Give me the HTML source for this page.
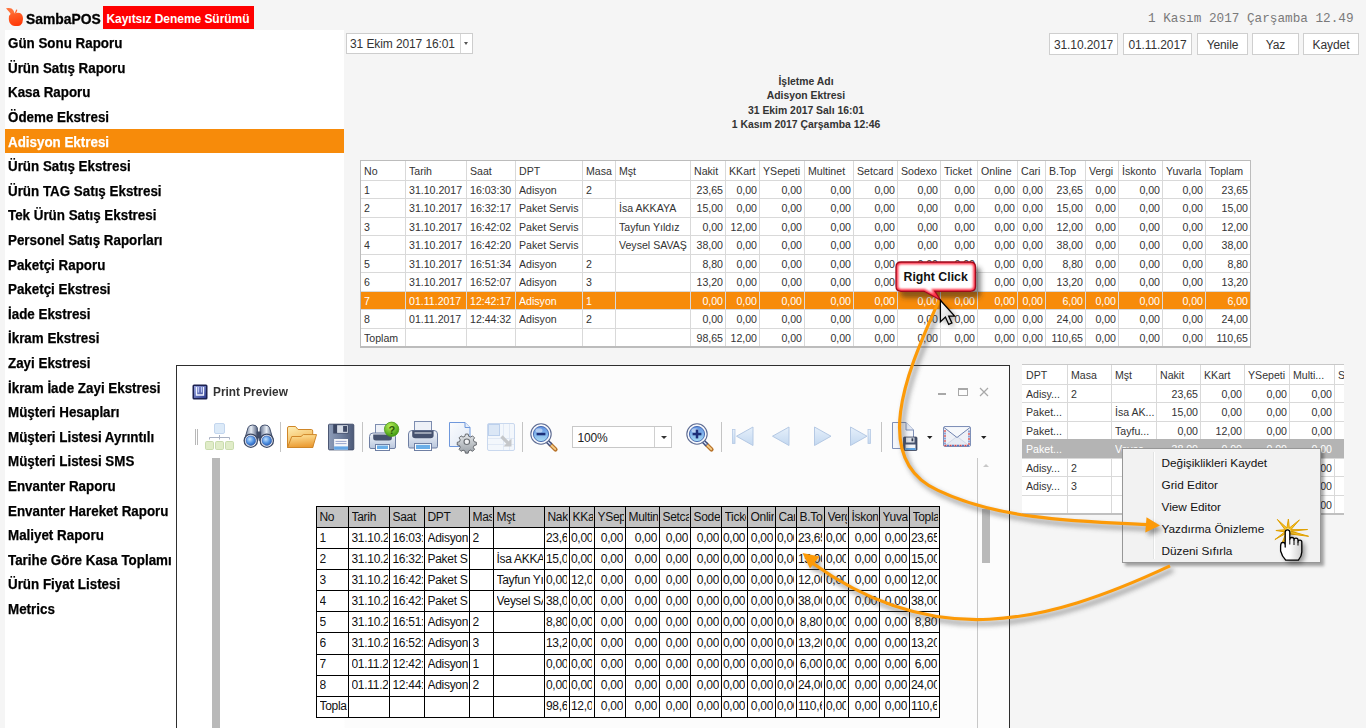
<!DOCTYPE html>
<html><head><meta charset="utf-8"><style>
*{box-sizing:border-box;margin:0;padding:0}
html,body{width:1366px;height:728px;overflow:hidden;background:#f5f5f5;font-family:"Liberation Sans",sans-serif;color:#222}
.a{position:absolute}
.mi{position:absolute;left:5px;width:339px;height:24px}
.mt{position:absolute;left:8.5px;font-weight:bold;color:#000;white-space:nowrap;-webkit-text-stroke:0.25px currentColor;transform:scaleX(0.955);transform-origin:0 0}
.btn{position:absolute;top:33px;height:22px;background:#fff;border:1px solid #cfcfcf;font-size:12px;color:#333;text-align:center;line-height:20px;padding-top:1px;white-space:nowrap}
.c{position:absolute;overflow:hidden;white-space:nowrap}
.hl{position:absolute;background:#d9d9d9}
.pl{position:absolute;background:#000}
.t{white-space:nowrap}
</style></head><body>
<div class="a" style="left:5px;top:30px;width:339px;height:698px;background:#fff"></div>
<svg class="a" style="left:0;top:0" width="30" height="30" viewBox="0 0 30 30">
<defs><linearGradient id="ap" x1="0" y1="0" x2="0.3" y2="1"><stop offset="0" stop-color="#ff6a30"/><stop offset="1" stop-color="#ff3a08"/></linearGradient></defs>
<path d="M6,8.2 Q9.5,7.6 11.5,8.4 Q13.5,9.6 14.6,13 L11.5,15 Q9.5,12 6,8.2Z" fill="#ff7038"/>
<path d="M15.6,12.8 L16.6,10.2" stroke="#ff6530" stroke-width="1.3" stroke-linecap="round"/>
<path d="M15.2,13.2 Q17.5,12.2 20,13 Q23,14.5 23,19 Q23,23 20.5,25.3 Q19.3,26.2 17.5,26 Q16.3,25.9 15.8,26 Q13.5,26.2 12,25.3 Q9,23.2 8.8,19 Q8.8,15 11,13.6 Q13,12.5 15.2,13.2Z" fill="url(#ap)"/>
</svg>
<div class="a t" style="left:26px;top:11.64px;font-size:14.6px;line-height:14.6px;font-weight:bold;color:#000;-webkit-text-stroke:0.3px #000;transform:scaleX(0.95);transform-origin:0 0">SambaPOS</div>
<div class="a" style="left:103px;top:6px;width:151px;height:23px;background:#ff0000"></div>
<div class="a t" style="left:106.5px;top:12.84px;font-size:12px;line-height:12px;font-weight:bold;color:#fff;letter-spacing:-0.05px">Kayıtsız Deneme Sürümü</div>
<div class="a t" style="left:1148px;top:13.25px;font-size:12.7px;line-height:12.7px;font-family:'Liberation Mono',monospace;color:#7a7a7a">1 Kasım 2017 Çarşamba 12.49</div>
<div class="mt" style="left:7.7px;top:36.15px;font-size:14px;line-height:14px;">Gün Sonu Raporu</div>
<div class="mt" style="left:7.7px;top:60.75px;font-size:14px;line-height:14px;">Ürün Satış Raporu</div>
<div class="mt" style="left:7.7px;top:85.35px;font-size:14px;line-height:14px;">Kasa Raporu</div>
<div class="mt" style="left:7.7px;top:109.95px;font-size:14px;line-height:14px;">Ödeme Ekstresi</div>
<div class="mi" style="top:129px;background:#f78b0a"></div>
<div class="mt" style="left:7.7px;top:134.55px;font-size:14px;line-height:14px;color:#fff">Adisyon Ektresi</div>
<div class="mt" style="left:7.7px;top:159.15px;font-size:14px;line-height:14px;">Ürün Satış Ekstresi</div>
<div class="mt" style="left:7.7px;top:183.75px;font-size:14px;line-height:14px;">Ürün TAG Satış Ekstresi</div>
<div class="mt" style="left:7.7px;top:208.35px;font-size:14px;line-height:14px;">Tek Ürün Satış Ekstresi</div>
<div class="mt" style="left:7.7px;top:232.95px;font-size:14px;line-height:14px;">Personel Satış Raporları</div>
<div class="mt" style="left:7.7px;top:257.55px;font-size:14px;line-height:14px;">Paketçi Raporu</div>
<div class="mt" style="left:7.7px;top:282.15px;font-size:14px;line-height:14px;">Paketçi Ekstresi</div>
<div class="mt" style="left:7.7px;top:306.75px;font-size:14px;line-height:14px;">İade Ekstresi</div>
<div class="mt" style="left:7.7px;top:331.35px;font-size:14px;line-height:14px;">İkram Ekstresi</div>
<div class="mt" style="left:7.7px;top:355.95px;font-size:14px;line-height:14px;">Zayi Ekstresi</div>
<div class="mt" style="left:7.7px;top:380.55px;font-size:14px;line-height:14px;">İkram İade Zayi Ekstresi</div>
<div class="mt" style="left:7.7px;top:405.15px;font-size:14px;line-height:14px;">Müşteri Hesapları</div>
<div class="mt" style="left:7.7px;top:429.75px;font-size:14px;line-height:14px;">Müşteri Listesi Ayrıntılı</div>
<div class="mt" style="left:7.7px;top:454.35px;font-size:14px;line-height:14px;">Müşteri Listesi SMS</div>
<div class="mt" style="left:7.7px;top:478.95px;font-size:14px;line-height:14px;">Envanter Raporu</div>
<div class="mt" style="left:7.7px;top:503.55px;font-size:14px;line-height:14px;">Envanter Hareket Raporu</div>
<div class="mt" style="left:7.7px;top:528.15px;font-size:14px;line-height:14px;">Maliyet Raporu</div>
<div class="mt" style="left:7.7px;top:552.75px;font-size:14px;line-height:14px;">Tarihe Göre Kasa Toplamı</div>
<div class="mt" style="left:7.7px;top:577.35px;font-size:14px;line-height:14px;">Ürün Fiyat Listesi</div>
<div class="mt" style="left:7.7px;top:601.95px;font-size:14px;line-height:14px;">Metrics</div>
<div class="a" style="left:346px;top:33px;width:127px;height:21px;background:#fff;border:1px solid #cdcdcd"></div>
<div class="a" style="left:460px;top:34px;width:1px;height:19px;background:#d6d6d6"></div>
<div class="a" style="left:464px;top:42px;width:0;height:0;border-left:2.5px solid transparent;border-right:2.5px solid transparent;border-top:3px solid #555"></div>
<div class="a t" style="left:350px;top:35px;font-size:12px;color:#333;line-height:18px;letter-spacing:-0.1px">31 Ekim 2017 16:01</div>
<div class="btn" style="left:1049px;width:69px;letter-spacing:-0.1px">31.10.2017</div>
<div class="btn" style="left:1123px;width:69px;letter-spacing:-0.1px">01.11.2017</div>
<div class="btn" style="left:1197px;width:51px;letter-spacing:-0.1px">Yenile</div>
<div class="btn" style="left:1252px;width:47px;letter-spacing:-0.1px">Yaz</div>
<div class="btn" style="left:1303px;width:56px;letter-spacing:-0.1px">Kaydet</div>
<div class="a t" style="left:606px;width:400px;text-align:center;top:77.30px;font-size:10.4px;font-weight:bold;color:#333;line-height:10.4px">İşletme Adı</div>
<div class="a t" style="left:606px;width:400px;text-align:center;top:91.40px;font-size:10.4px;font-weight:bold;color:#333;line-height:10.4px">Adisyon Ektresi</div>
<div class="a t" style="left:606px;width:400px;text-align:center;top:105.60px;font-size:10.4px;font-weight:bold;color:#333;line-height:10.4px">31 Ekim 2017 Salı 16:01</div>
<div class="a t" style="left:606px;width:400px;text-align:center;top:120.20px;font-size:10.4px;font-weight:bold;color:#333;line-height:10.4px">1 Kasım 2017 Çarşamba 12:46</div>
<div class="a" style="left:360px;top:160px;width:891px;height:188px;background:#fff;border:1px solid #bcbcbc;border-bottom:2px solid #bcbcbc"></div>
<div class="a" style="left:361px;top:291px;width:889px;height:18px;background:#f78b0a"></div>
<div class="hl" style="left:361px;top:180px;width:889px;height:1px"></div>
<div class="hl" style="left:361px;top:198px;width:889px;height:1px"></div>
<div class="hl" style="left:361px;top:217px;width:889px;height:1px"></div>
<div class="hl" style="left:361px;top:235px;width:889px;height:1px"></div>
<div class="hl" style="left:361px;top:254px;width:889px;height:1px"></div>
<div class="hl" style="left:361px;top:272px;width:889px;height:1px"></div>
<div class="hl" style="left:361px;top:291px;width:889px;height:1px"></div>
<div class="hl" style="left:361px;top:309px;width:889px;height:1px"></div>
<div class="hl" style="left:361px;top:328px;width:889px;height:1px"></div>
<div class="hl" style="left:405px;top:161px;width:1px;height:185px"></div>
<div class="hl" style="left:466px;top:161px;width:1px;height:185px"></div>
<div class="hl" style="left:515px;top:161px;width:1px;height:185px"></div>
<div class="hl" style="left:582px;top:161px;width:1px;height:185px"></div>
<div class="hl" style="left:615px;top:161px;width:1px;height:185px"></div>
<div class="hl" style="left:690px;top:161px;width:1px;height:185px"></div>
<div class="hl" style="left:725px;top:161px;width:1px;height:185px"></div>
<div class="hl" style="left:759px;top:161px;width:1px;height:185px"></div>
<div class="hl" style="left:804px;top:161px;width:1px;height:185px"></div>
<div class="hl" style="left:853px;top:161px;width:1px;height:185px"></div>
<div class="hl" style="left:897px;top:161px;width:1px;height:185px"></div>
<div class="hl" style="left:940px;top:161px;width:1px;height:185px"></div>
<div class="hl" style="left:977px;top:161px;width:1px;height:185px"></div>
<div class="hl" style="left:1017px;top:161px;width:1px;height:185px"></div>
<div class="hl" style="left:1045px;top:161px;width:1px;height:185px"></div>
<div class="hl" style="left:1085px;top:161px;width:1px;height:185px"></div>
<div class="hl" style="left:1118px;top:161px;width:1px;height:185px"></div>
<div class="hl" style="left:1162px;top:161px;width:1px;height:185px"></div>
<div class="hl" style="left:1205px;top:161px;width:1px;height:185px"></div>
<div class="c" style="left:364px;top:164.0px;width:41px;height:14px;font-size:10.6px;line-height:14px;color:#333">No</div>
<div class="c" style="left:409px;top:164.0px;width:57px;height:14px;font-size:10.6px;line-height:14px;color:#333">Tarih</div>
<div class="c" style="left:470px;top:164.0px;width:45px;height:14px;font-size:10.6px;line-height:14px;color:#333">Saat</div>
<div class="c" style="left:519px;top:164.0px;width:63px;height:14px;font-size:10.6px;line-height:14px;color:#333">DPT</div>
<div class="c" style="left:586px;top:164.0px;width:29px;height:14px;font-size:10.6px;line-height:14px;color:#333">Masa</div>
<div class="c" style="left:619px;top:164.0px;width:71px;height:14px;font-size:10.6px;line-height:14px;color:#333">Mşt</div>
<div class="c" style="left:694px;top:164.0px;width:31px;height:14px;font-size:10.6px;line-height:14px;color:#333">Nakit</div>
<div class="c" style="left:729px;top:164.0px;width:30px;height:14px;font-size:10.6px;line-height:14px;color:#333">KKart</div>
<div class="c" style="left:763px;top:164.0px;width:41px;height:14px;font-size:10.6px;line-height:14px;color:#333">YSepeti</div>
<div class="c" style="left:808px;top:164.0px;width:45px;height:14px;font-size:10.6px;line-height:14px;color:#333">Multinet</div>
<div class="c" style="left:857px;top:164.0px;width:40px;height:14px;font-size:10.6px;line-height:14px;color:#333">Setcard</div>
<div class="c" style="left:901px;top:164.0px;width:39px;height:14px;font-size:10.6px;line-height:14px;color:#333">Sodexo</div>
<div class="c" style="left:944px;top:164.0px;width:33px;height:14px;font-size:10.6px;line-height:14px;color:#333">Ticket</div>
<div class="c" style="left:981px;top:164.0px;width:36px;height:14px;font-size:10.6px;line-height:14px;color:#333">Online</div>
<div class="c" style="left:1021px;top:164.0px;width:24px;height:14px;font-size:10.6px;line-height:14px;color:#333">Cari</div>
<div class="c" style="left:1049px;top:164.0px;width:36px;height:14px;font-size:10.6px;line-height:14px;color:#333">B.Top</div>
<div class="c" style="left:1089px;top:164.0px;width:29px;height:14px;font-size:10.6px;line-height:14px;color:#333">Vergi</div>
<div class="c" style="left:1122px;top:164.0px;width:40px;height:14px;font-size:10.6px;line-height:14px;color:#333">İskonto</div>
<div class="c" style="left:1166px;top:164.0px;width:39px;height:14px;font-size:10.6px;line-height:14px;color:#333">Yuvarla</div>
<div class="c" style="left:1209px;top:164.0px;width:41px;height:14px;font-size:10.6px;line-height:14px;color:#333">Toplam</div>
<div class="c" style="left:364px;top:182.5px;width:41px;font-size:10.6px;line-height:14px;color:#333">1</div>
<div class="c" style="left:409px;top:182.5px;width:57px;font-size:10.6px;line-height:14px;color:#333">31.10.2017</div>
<div class="c" style="left:470px;top:182.5px;width:45px;font-size:10.6px;line-height:14px;color:#333">16:03:30</div>
<div class="c" style="left:519px;top:182.5px;width:63px;font-size:10.6px;line-height:14px;color:#333">Adisyon</div>
<div class="c" style="left:586px;top:182.5px;width:29px;font-size:10.6px;line-height:14px;color:#333">2</div>
<div class="c" style="left:691px;top:182.5px;width:32.0px;text-align:right;font-size:10.6px;line-height:14px;color:#333">23,65</div>
<div class="c" style="left:726px;top:182.5px;width:31.0px;text-align:right;font-size:10.6px;line-height:14px;color:#333">0,00</div>
<div class="c" style="left:760px;top:182.5px;width:42.0px;text-align:right;font-size:10.6px;line-height:14px;color:#333">0,00</div>
<div class="c" style="left:805px;top:182.5px;width:46.0px;text-align:right;font-size:10.6px;line-height:14px;color:#333">0,00</div>
<div class="c" style="left:854px;top:182.5px;width:41.0px;text-align:right;font-size:10.6px;line-height:14px;color:#333">0,00</div>
<div class="c" style="left:898px;top:182.5px;width:40.0px;text-align:right;font-size:10.6px;line-height:14px;color:#333">0,00</div>
<div class="c" style="left:941px;top:182.5px;width:34.0px;text-align:right;font-size:10.6px;line-height:14px;color:#333">0,00</div>
<div class="c" style="left:978px;top:182.5px;width:37.0px;text-align:right;font-size:10.6px;line-height:14px;color:#333">0,00</div>
<div class="c" style="left:1018px;top:182.5px;width:25.0px;text-align:right;font-size:10.6px;line-height:14px;color:#333">0,00</div>
<div class="c" style="left:1046px;top:182.5px;width:37.0px;text-align:right;font-size:10.6px;line-height:14px;color:#333">23,65</div>
<div class="c" style="left:1086px;top:182.5px;width:30.0px;text-align:right;font-size:10.6px;line-height:14px;color:#333">0,00</div>
<div class="c" style="left:1119px;top:182.5px;width:41.0px;text-align:right;font-size:10.6px;line-height:14px;color:#333">0,00</div>
<div class="c" style="left:1163px;top:182.5px;width:40.0px;text-align:right;font-size:10.6px;line-height:14px;color:#333">0,00</div>
<div class="c" style="left:1206px;top:182.5px;width:42.0px;text-align:right;font-size:10.6px;line-height:14px;color:#333">23,65</div>
<div class="c" style="left:364px;top:201.0px;width:41px;font-size:10.6px;line-height:14px;color:#333">2</div>
<div class="c" style="left:409px;top:201.0px;width:57px;font-size:10.6px;line-height:14px;color:#333">31.10.2017</div>
<div class="c" style="left:470px;top:201.0px;width:45px;font-size:10.6px;line-height:14px;color:#333">16:32:17</div>
<div class="c" style="left:519px;top:201.0px;width:63px;font-size:10.6px;line-height:14px;color:#333">Paket Servis</div>
<div class="c" style="left:619px;top:201.0px;width:71px;font-size:10.6px;line-height:14px;color:#333">İsa AKKAYA</div>
<div class="c" style="left:691px;top:201.0px;width:32.0px;text-align:right;font-size:10.6px;line-height:14px;color:#333">15,00</div>
<div class="c" style="left:726px;top:201.0px;width:31.0px;text-align:right;font-size:10.6px;line-height:14px;color:#333">0,00</div>
<div class="c" style="left:760px;top:201.0px;width:42.0px;text-align:right;font-size:10.6px;line-height:14px;color:#333">0,00</div>
<div class="c" style="left:805px;top:201.0px;width:46.0px;text-align:right;font-size:10.6px;line-height:14px;color:#333">0,00</div>
<div class="c" style="left:854px;top:201.0px;width:41.0px;text-align:right;font-size:10.6px;line-height:14px;color:#333">0,00</div>
<div class="c" style="left:898px;top:201.0px;width:40.0px;text-align:right;font-size:10.6px;line-height:14px;color:#333">0,00</div>
<div class="c" style="left:941px;top:201.0px;width:34.0px;text-align:right;font-size:10.6px;line-height:14px;color:#333">0,00</div>
<div class="c" style="left:978px;top:201.0px;width:37.0px;text-align:right;font-size:10.6px;line-height:14px;color:#333">0,00</div>
<div class="c" style="left:1018px;top:201.0px;width:25.0px;text-align:right;font-size:10.6px;line-height:14px;color:#333">0,00</div>
<div class="c" style="left:1046px;top:201.0px;width:37.0px;text-align:right;font-size:10.6px;line-height:14px;color:#333">15,00</div>
<div class="c" style="left:1086px;top:201.0px;width:30.0px;text-align:right;font-size:10.6px;line-height:14px;color:#333">0,00</div>
<div class="c" style="left:1119px;top:201.0px;width:41.0px;text-align:right;font-size:10.6px;line-height:14px;color:#333">0,00</div>
<div class="c" style="left:1163px;top:201.0px;width:40.0px;text-align:right;font-size:10.6px;line-height:14px;color:#333">0,00</div>
<div class="c" style="left:1206px;top:201.0px;width:42.0px;text-align:right;font-size:10.6px;line-height:14px;color:#333">15,00</div>
<div class="c" style="left:364px;top:219.5px;width:41px;font-size:10.6px;line-height:14px;color:#333">3</div>
<div class="c" style="left:409px;top:219.5px;width:57px;font-size:10.6px;line-height:14px;color:#333">31.10.2017</div>
<div class="c" style="left:470px;top:219.5px;width:45px;font-size:10.6px;line-height:14px;color:#333">16:42:02</div>
<div class="c" style="left:519px;top:219.5px;width:63px;font-size:10.6px;line-height:14px;color:#333">Paket Servis</div>
<div class="c" style="left:619px;top:219.5px;width:71px;font-size:10.6px;line-height:14px;color:#333">Tayfun Yıldız</div>
<div class="c" style="left:691px;top:219.5px;width:32.0px;text-align:right;font-size:10.6px;line-height:14px;color:#333">0,00</div>
<div class="c" style="left:726px;top:219.5px;width:31.0px;text-align:right;font-size:10.6px;line-height:14px;color:#333">12,00</div>
<div class="c" style="left:760px;top:219.5px;width:42.0px;text-align:right;font-size:10.6px;line-height:14px;color:#333">0,00</div>
<div class="c" style="left:805px;top:219.5px;width:46.0px;text-align:right;font-size:10.6px;line-height:14px;color:#333">0,00</div>
<div class="c" style="left:854px;top:219.5px;width:41.0px;text-align:right;font-size:10.6px;line-height:14px;color:#333">0,00</div>
<div class="c" style="left:898px;top:219.5px;width:40.0px;text-align:right;font-size:10.6px;line-height:14px;color:#333">0,00</div>
<div class="c" style="left:941px;top:219.5px;width:34.0px;text-align:right;font-size:10.6px;line-height:14px;color:#333">0,00</div>
<div class="c" style="left:978px;top:219.5px;width:37.0px;text-align:right;font-size:10.6px;line-height:14px;color:#333">0,00</div>
<div class="c" style="left:1018px;top:219.5px;width:25.0px;text-align:right;font-size:10.6px;line-height:14px;color:#333">0,00</div>
<div class="c" style="left:1046px;top:219.5px;width:37.0px;text-align:right;font-size:10.6px;line-height:14px;color:#333">12,00</div>
<div class="c" style="left:1086px;top:219.5px;width:30.0px;text-align:right;font-size:10.6px;line-height:14px;color:#333">0,00</div>
<div class="c" style="left:1119px;top:219.5px;width:41.0px;text-align:right;font-size:10.6px;line-height:14px;color:#333">0,00</div>
<div class="c" style="left:1163px;top:219.5px;width:40.0px;text-align:right;font-size:10.6px;line-height:14px;color:#333">0,00</div>
<div class="c" style="left:1206px;top:219.5px;width:42.0px;text-align:right;font-size:10.6px;line-height:14px;color:#333">12,00</div>
<div class="c" style="left:364px;top:238.0px;width:41px;font-size:10.6px;line-height:14px;color:#333">4</div>
<div class="c" style="left:409px;top:238.0px;width:57px;font-size:10.6px;line-height:14px;color:#333">31.10.2017</div>
<div class="c" style="left:470px;top:238.0px;width:45px;font-size:10.6px;line-height:14px;color:#333">16:42:20</div>
<div class="c" style="left:519px;top:238.0px;width:63px;font-size:10.6px;line-height:14px;color:#333">Paket Servis</div>
<div class="c" style="left:619px;top:238.0px;width:71px;font-size:10.6px;line-height:14px;color:#333">Veysel SAVAŞ</div>
<div class="c" style="left:691px;top:238.0px;width:32.0px;text-align:right;font-size:10.6px;line-height:14px;color:#333">38,00</div>
<div class="c" style="left:726px;top:238.0px;width:31.0px;text-align:right;font-size:10.6px;line-height:14px;color:#333">0,00</div>
<div class="c" style="left:760px;top:238.0px;width:42.0px;text-align:right;font-size:10.6px;line-height:14px;color:#333">0,00</div>
<div class="c" style="left:805px;top:238.0px;width:46.0px;text-align:right;font-size:10.6px;line-height:14px;color:#333">0,00</div>
<div class="c" style="left:854px;top:238.0px;width:41.0px;text-align:right;font-size:10.6px;line-height:14px;color:#333">0,00</div>
<div class="c" style="left:898px;top:238.0px;width:40.0px;text-align:right;font-size:10.6px;line-height:14px;color:#333">0,00</div>
<div class="c" style="left:941px;top:238.0px;width:34.0px;text-align:right;font-size:10.6px;line-height:14px;color:#333">0,00</div>
<div class="c" style="left:978px;top:238.0px;width:37.0px;text-align:right;font-size:10.6px;line-height:14px;color:#333">0,00</div>
<div class="c" style="left:1018px;top:238.0px;width:25.0px;text-align:right;font-size:10.6px;line-height:14px;color:#333">0,00</div>
<div class="c" style="left:1046px;top:238.0px;width:37.0px;text-align:right;font-size:10.6px;line-height:14px;color:#333">38,00</div>
<div class="c" style="left:1086px;top:238.0px;width:30.0px;text-align:right;font-size:10.6px;line-height:14px;color:#333">0,00</div>
<div class="c" style="left:1119px;top:238.0px;width:41.0px;text-align:right;font-size:10.6px;line-height:14px;color:#333">0,00</div>
<div class="c" style="left:1163px;top:238.0px;width:40.0px;text-align:right;font-size:10.6px;line-height:14px;color:#333">0,00</div>
<div class="c" style="left:1206px;top:238.0px;width:42.0px;text-align:right;font-size:10.6px;line-height:14px;color:#333">38,00</div>
<div class="c" style="left:364px;top:256.5px;width:41px;font-size:10.6px;line-height:14px;color:#333">5</div>
<div class="c" style="left:409px;top:256.5px;width:57px;font-size:10.6px;line-height:14px;color:#333">31.10.2017</div>
<div class="c" style="left:470px;top:256.5px;width:45px;font-size:10.6px;line-height:14px;color:#333">16:51:34</div>
<div class="c" style="left:519px;top:256.5px;width:63px;font-size:10.6px;line-height:14px;color:#333">Adisyon</div>
<div class="c" style="left:586px;top:256.5px;width:29px;font-size:10.6px;line-height:14px;color:#333">2</div>
<div class="c" style="left:691px;top:256.5px;width:32.0px;text-align:right;font-size:10.6px;line-height:14px;color:#333">8,80</div>
<div class="c" style="left:726px;top:256.5px;width:31.0px;text-align:right;font-size:10.6px;line-height:14px;color:#333">0,00</div>
<div class="c" style="left:760px;top:256.5px;width:42.0px;text-align:right;font-size:10.6px;line-height:14px;color:#333">0,00</div>
<div class="c" style="left:805px;top:256.5px;width:46.0px;text-align:right;font-size:10.6px;line-height:14px;color:#333">0,00</div>
<div class="c" style="left:854px;top:256.5px;width:41.0px;text-align:right;font-size:10.6px;line-height:14px;color:#333">0,00</div>
<div class="c" style="left:898px;top:256.5px;width:40.0px;text-align:right;font-size:10.6px;line-height:14px;color:#333">0,00</div>
<div class="c" style="left:941px;top:256.5px;width:34.0px;text-align:right;font-size:10.6px;line-height:14px;color:#333">0,00</div>
<div class="c" style="left:978px;top:256.5px;width:37.0px;text-align:right;font-size:10.6px;line-height:14px;color:#333">0,00</div>
<div class="c" style="left:1018px;top:256.5px;width:25.0px;text-align:right;font-size:10.6px;line-height:14px;color:#333">0,00</div>
<div class="c" style="left:1046px;top:256.5px;width:37.0px;text-align:right;font-size:10.6px;line-height:14px;color:#333">8,80</div>
<div class="c" style="left:1086px;top:256.5px;width:30.0px;text-align:right;font-size:10.6px;line-height:14px;color:#333">0,00</div>
<div class="c" style="left:1119px;top:256.5px;width:41.0px;text-align:right;font-size:10.6px;line-height:14px;color:#333">0,00</div>
<div class="c" style="left:1163px;top:256.5px;width:40.0px;text-align:right;font-size:10.6px;line-height:14px;color:#333">0,00</div>
<div class="c" style="left:1206px;top:256.5px;width:42.0px;text-align:right;font-size:10.6px;line-height:14px;color:#333">8,80</div>
<div class="c" style="left:364px;top:275.0px;width:41px;font-size:10.6px;line-height:14px;color:#333">6</div>
<div class="c" style="left:409px;top:275.0px;width:57px;font-size:10.6px;line-height:14px;color:#333">31.10.2017</div>
<div class="c" style="left:470px;top:275.0px;width:45px;font-size:10.6px;line-height:14px;color:#333">16:52:07</div>
<div class="c" style="left:519px;top:275.0px;width:63px;font-size:10.6px;line-height:14px;color:#333">Adisyon</div>
<div class="c" style="left:586px;top:275.0px;width:29px;font-size:10.6px;line-height:14px;color:#333">3</div>
<div class="c" style="left:691px;top:275.0px;width:32.0px;text-align:right;font-size:10.6px;line-height:14px;color:#333">13,20</div>
<div class="c" style="left:726px;top:275.0px;width:31.0px;text-align:right;font-size:10.6px;line-height:14px;color:#333">0,00</div>
<div class="c" style="left:760px;top:275.0px;width:42.0px;text-align:right;font-size:10.6px;line-height:14px;color:#333">0,00</div>
<div class="c" style="left:805px;top:275.0px;width:46.0px;text-align:right;font-size:10.6px;line-height:14px;color:#333">0,00</div>
<div class="c" style="left:854px;top:275.0px;width:41.0px;text-align:right;font-size:10.6px;line-height:14px;color:#333">0,00</div>
<div class="c" style="left:898px;top:275.0px;width:40.0px;text-align:right;font-size:10.6px;line-height:14px;color:#333">0,00</div>
<div class="c" style="left:941px;top:275.0px;width:34.0px;text-align:right;font-size:10.6px;line-height:14px;color:#333">0,00</div>
<div class="c" style="left:978px;top:275.0px;width:37.0px;text-align:right;font-size:10.6px;line-height:14px;color:#333">0,00</div>
<div class="c" style="left:1018px;top:275.0px;width:25.0px;text-align:right;font-size:10.6px;line-height:14px;color:#333">0,00</div>
<div class="c" style="left:1046px;top:275.0px;width:37.0px;text-align:right;font-size:10.6px;line-height:14px;color:#333">13,20</div>
<div class="c" style="left:1086px;top:275.0px;width:30.0px;text-align:right;font-size:10.6px;line-height:14px;color:#333">0,00</div>
<div class="c" style="left:1119px;top:275.0px;width:41.0px;text-align:right;font-size:10.6px;line-height:14px;color:#333">0,00</div>
<div class="c" style="left:1163px;top:275.0px;width:40.0px;text-align:right;font-size:10.6px;line-height:14px;color:#333">0,00</div>
<div class="c" style="left:1206px;top:275.0px;width:42.0px;text-align:right;font-size:10.6px;line-height:14px;color:#333">13,20</div>
<div class="c" style="left:364px;top:293.5px;width:41px;font-size:10.6px;line-height:14px;color:#fff">7</div>
<div class="c" style="left:409px;top:293.5px;width:57px;font-size:10.6px;line-height:14px;color:#fff">01.11.2017</div>
<div class="c" style="left:470px;top:293.5px;width:45px;font-size:10.6px;line-height:14px;color:#fff">12:42:17</div>
<div class="c" style="left:519px;top:293.5px;width:63px;font-size:10.6px;line-height:14px;color:#fff">Adisyon</div>
<div class="c" style="left:586px;top:293.5px;width:29px;font-size:10.6px;line-height:14px;color:#fff">1</div>
<div class="c" style="left:691px;top:293.5px;width:32.0px;text-align:right;font-size:10.6px;line-height:14px;color:#fff">0,00</div>
<div class="c" style="left:726px;top:293.5px;width:31.0px;text-align:right;font-size:10.6px;line-height:14px;color:#fff">0,00</div>
<div class="c" style="left:760px;top:293.5px;width:42.0px;text-align:right;font-size:10.6px;line-height:14px;color:#fff">0,00</div>
<div class="c" style="left:805px;top:293.5px;width:46.0px;text-align:right;font-size:10.6px;line-height:14px;color:#fff">0,00</div>
<div class="c" style="left:854px;top:293.5px;width:41.0px;text-align:right;font-size:10.6px;line-height:14px;color:#fff">0,00</div>
<div class="c" style="left:898px;top:293.5px;width:40.0px;text-align:right;font-size:10.6px;line-height:14px;color:#fff">0,00</div>
<div class="c" style="left:941px;top:293.5px;width:34.0px;text-align:right;font-size:10.6px;line-height:14px;color:#fff">0,00</div>
<div class="c" style="left:978px;top:293.5px;width:37.0px;text-align:right;font-size:10.6px;line-height:14px;color:#fff">0,00</div>
<div class="c" style="left:1018px;top:293.5px;width:25.0px;text-align:right;font-size:10.6px;line-height:14px;color:#fff">0,00</div>
<div class="c" style="left:1046px;top:293.5px;width:37.0px;text-align:right;font-size:10.6px;line-height:14px;color:#fff">6,00</div>
<div class="c" style="left:1086px;top:293.5px;width:30.0px;text-align:right;font-size:10.6px;line-height:14px;color:#fff">0,00</div>
<div class="c" style="left:1119px;top:293.5px;width:41.0px;text-align:right;font-size:10.6px;line-height:14px;color:#fff">0,00</div>
<div class="c" style="left:1163px;top:293.5px;width:40.0px;text-align:right;font-size:10.6px;line-height:14px;color:#fff">0,00</div>
<div class="c" style="left:1206px;top:293.5px;width:42.0px;text-align:right;font-size:10.6px;line-height:14px;color:#fff">6,00</div>
<div class="c" style="left:364px;top:312.0px;width:41px;font-size:10.6px;line-height:14px;color:#333">8</div>
<div class="c" style="left:409px;top:312.0px;width:57px;font-size:10.6px;line-height:14px;color:#333">01.11.2017</div>
<div class="c" style="left:470px;top:312.0px;width:45px;font-size:10.6px;line-height:14px;color:#333">12:44:32</div>
<div class="c" style="left:519px;top:312.0px;width:63px;font-size:10.6px;line-height:14px;color:#333">Adisyon</div>
<div class="c" style="left:586px;top:312.0px;width:29px;font-size:10.6px;line-height:14px;color:#333">2</div>
<div class="c" style="left:691px;top:312.0px;width:32.0px;text-align:right;font-size:10.6px;line-height:14px;color:#333">0,00</div>
<div class="c" style="left:726px;top:312.0px;width:31.0px;text-align:right;font-size:10.6px;line-height:14px;color:#333">0,00</div>
<div class="c" style="left:760px;top:312.0px;width:42.0px;text-align:right;font-size:10.6px;line-height:14px;color:#333">0,00</div>
<div class="c" style="left:805px;top:312.0px;width:46.0px;text-align:right;font-size:10.6px;line-height:14px;color:#333">0,00</div>
<div class="c" style="left:854px;top:312.0px;width:41.0px;text-align:right;font-size:10.6px;line-height:14px;color:#333">0,00</div>
<div class="c" style="left:898px;top:312.0px;width:40.0px;text-align:right;font-size:10.6px;line-height:14px;color:#333">0,00</div>
<div class="c" style="left:941px;top:312.0px;width:34.0px;text-align:right;font-size:10.6px;line-height:14px;color:#333">0,00</div>
<div class="c" style="left:978px;top:312.0px;width:37.0px;text-align:right;font-size:10.6px;line-height:14px;color:#333">0,00</div>
<div class="c" style="left:1018px;top:312.0px;width:25.0px;text-align:right;font-size:10.6px;line-height:14px;color:#333">0,00</div>
<div class="c" style="left:1046px;top:312.0px;width:37.0px;text-align:right;font-size:10.6px;line-height:14px;color:#333">24,00</div>
<div class="c" style="left:1086px;top:312.0px;width:30.0px;text-align:right;font-size:10.6px;line-height:14px;color:#333">0,00</div>
<div class="c" style="left:1119px;top:312.0px;width:41.0px;text-align:right;font-size:10.6px;line-height:14px;color:#333">0,00</div>
<div class="c" style="left:1163px;top:312.0px;width:40.0px;text-align:right;font-size:10.6px;line-height:14px;color:#333">0,00</div>
<div class="c" style="left:1206px;top:312.0px;width:42.0px;text-align:right;font-size:10.6px;line-height:14px;color:#333">24,00</div>
<div class="c" style="left:364px;top:330.5px;width:41px;font-size:10.6px;line-height:14px;color:#333">Toplam</div>
<div class="c" style="left:691px;top:330.5px;width:32.0px;text-align:right;font-size:10.6px;line-height:14px;color:#333">98,65</div>
<div class="c" style="left:726px;top:330.5px;width:31.0px;text-align:right;font-size:10.6px;line-height:14px;color:#333">12,00</div>
<div class="c" style="left:760px;top:330.5px;width:42.0px;text-align:right;font-size:10.6px;line-height:14px;color:#333">0,00</div>
<div class="c" style="left:805px;top:330.5px;width:46.0px;text-align:right;font-size:10.6px;line-height:14px;color:#333">0,00</div>
<div class="c" style="left:854px;top:330.5px;width:41.0px;text-align:right;font-size:10.6px;line-height:14px;color:#333">0,00</div>
<div class="c" style="left:898px;top:330.5px;width:40.0px;text-align:right;font-size:10.6px;line-height:14px;color:#333">0,00</div>
<div class="c" style="left:941px;top:330.5px;width:34.0px;text-align:right;font-size:10.6px;line-height:14px;color:#333">0,00</div>
<div class="c" style="left:978px;top:330.5px;width:37.0px;text-align:right;font-size:10.6px;line-height:14px;color:#333">0,00</div>
<div class="c" style="left:1018px;top:330.5px;width:25.0px;text-align:right;font-size:10.6px;line-height:14px;color:#333">0,00</div>
<div class="c" style="left:1046px;top:330.5px;width:37.0px;text-align:right;font-size:10.6px;line-height:14px;color:#333">110,65</div>
<div class="c" style="left:1086px;top:330.5px;width:30.0px;text-align:right;font-size:10.6px;line-height:14px;color:#333">0,00</div>
<div class="c" style="left:1119px;top:330.5px;width:41.0px;text-align:right;font-size:10.6px;line-height:14px;color:#333">0,00</div>
<div class="c" style="left:1163px;top:330.5px;width:40.0px;text-align:right;font-size:10.6px;line-height:14px;color:#333">0,00</div>
<div class="c" style="left:1206px;top:330.5px;width:42.0px;text-align:right;font-size:10.6px;line-height:14px;color:#333">110,65</div>
<div class="a" style="left:1022px;top:364px;width:322.0px;height:151px;background:#fff;border-top:1px solid #c8c8c8;border-bottom:2px solid #c0c0c0"></div>
<div class="hl" style="left:1022px;top:384px;width:322.0px;height:1px"></div>
<div class="hl" style="left:1022px;top:402px;width:322.0px;height:1px"></div>
<div class="hl" style="left:1022px;top:421px;width:322.0px;height:1px"></div>
<div class="hl" style="left:1022px;top:439px;width:322.0px;height:1px"></div>
<div class="hl" style="left:1022px;top:458px;width:322.0px;height:1px"></div>
<div class="hl" style="left:1022px;top:476px;width:322.0px;height:1px"></div>
<div class="hl" style="left:1022px;top:495px;width:322.0px;height:1px"></div>
<div class="hl" style="left:1067px;top:365px;width:1px;height:148.0px"></div>
<div class="hl" style="left:1111px;top:365px;width:1px;height:148.0px"></div>
<div class="hl" style="left:1156px;top:365px;width:1px;height:148.0px"></div>
<div class="hl" style="left:1200px;top:365px;width:1px;height:148.0px"></div>
<div class="hl" style="left:1244px;top:365px;width:1px;height:148.0px"></div>
<div class="hl" style="left:1289px;top:365px;width:1px;height:148.0px"></div>
<div class="hl" style="left:1334px;top:365px;width:1px;height:148.0px"></div>
<div class="a" style="left:1022px;top:439px;width:322.0px;height:19.0px;background:#b4b4b4"></div>
<div class="c" style="left:1026px;top:368.0px;width:41.0px;height:14px;font-size:10.6px;line-height:14px;color:#333">DPT</div>
<div class="c" style="left:1071px;top:368.0px;width:40.0px;height:14px;font-size:10.6px;line-height:14px;color:#333">Masa</div>
<div class="c" style="left:1115px;top:368.0px;width:41.0px;height:14px;font-size:10.6px;line-height:14px;color:#333">Mşt</div>
<div class="c" style="left:1160px;top:368.0px;width:40.0px;height:14px;font-size:10.6px;line-height:14px;color:#333">Nakit</div>
<div class="c" style="left:1204px;top:368.0px;width:40.0px;height:14px;font-size:10.6px;line-height:14px;color:#333">KKart</div>
<div class="c" style="left:1248px;top:368.0px;width:41.0px;height:14px;font-size:10.6px;line-height:14px;color:#333">YSepeti</div>
<div class="c" style="left:1293px;top:368.0px;width:41.0px;height:14px;font-size:10.6px;line-height:14px;color:#333">Multi...</div>
<div class="c" style="left:1338px;top:368.0px;width:6.0px;height:14px;font-size:10.6px;line-height:14px;color:#333">S</div>
<div class="c" style="left:1026px;top:386.5px;width:41.0px;font-size:10.6px;line-height:14px;color:#333">Adisy...</div>
<div class="c" style="left:1071px;top:386.5px;width:40.0px;font-size:10.6px;line-height:14px;color:#333">2</div>
<div class="c" style="left:1157px;top:386.5px;width:41.0px;text-align:right;font-size:10.6px;line-height:14px;color:#333">23,65</div>
<div class="c" style="left:1201px;top:386.5px;width:41.0px;text-align:right;font-size:10.6px;line-height:14px;color:#333">0,00</div>
<div class="c" style="left:1245px;top:386.5px;width:42.0px;text-align:right;font-size:10.6px;line-height:14px;color:#333">0,00</div>
<div class="c" style="left:1290px;top:386.5px;width:42.0px;text-align:right;font-size:10.6px;line-height:14px;color:#333">0,00</div>
<div class="c" style="left:1026px;top:405.0px;width:41.0px;font-size:10.6px;line-height:14px;color:#333">Paket...</div>
<div class="c" style="left:1115px;top:405.0px;width:41.0px;font-size:10.6px;line-height:14px;color:#333">İsa AK...</div>
<div class="c" style="left:1157px;top:405.0px;width:41.0px;text-align:right;font-size:10.6px;line-height:14px;color:#333">15,00</div>
<div class="c" style="left:1201px;top:405.0px;width:41.0px;text-align:right;font-size:10.6px;line-height:14px;color:#333">0,00</div>
<div class="c" style="left:1245px;top:405.0px;width:42.0px;text-align:right;font-size:10.6px;line-height:14px;color:#333">0,00</div>
<div class="c" style="left:1290px;top:405.0px;width:42.0px;text-align:right;font-size:10.6px;line-height:14px;color:#333">0,00</div>
<div class="c" style="left:1026px;top:423.5px;width:41.0px;font-size:10.6px;line-height:14px;color:#333">Paket...</div>
<div class="c" style="left:1115px;top:423.5px;width:41.0px;font-size:10.6px;line-height:14px;color:#333">Tayfu...</div>
<div class="c" style="left:1157px;top:423.5px;width:41.0px;text-align:right;font-size:10.6px;line-height:14px;color:#333">0,00</div>
<div class="c" style="left:1201px;top:423.5px;width:41.0px;text-align:right;font-size:10.6px;line-height:14px;color:#333">12,00</div>
<div class="c" style="left:1245px;top:423.5px;width:42.0px;text-align:right;font-size:10.6px;line-height:14px;color:#333">0,00</div>
<div class="c" style="left:1290px;top:423.5px;width:42.0px;text-align:right;font-size:10.6px;line-height:14px;color:#333">0,00</div>
<div class="c" style="left:1026px;top:442.0px;width:41.0px;font-size:10.6px;line-height:14px;color:#fff">Paket...</div>
<div class="c" style="left:1115px;top:442.0px;width:41.0px;font-size:10.6px;line-height:14px;color:#fff">Veyse...</div>
<div class="c" style="left:1157px;top:442.0px;width:41.0px;text-align:right;font-size:10.6px;line-height:14px;color:#fff">38,00</div>
<div class="c" style="left:1201px;top:442.0px;width:41.0px;text-align:right;font-size:10.6px;line-height:14px;color:#fff">0,00</div>
<div class="c" style="left:1245px;top:442.0px;width:42.0px;text-align:right;font-size:10.6px;line-height:14px;color:#fff">0,00</div>
<div class="c" style="left:1290px;top:442.0px;width:42.0px;text-align:right;font-size:10.6px;line-height:14px;color:#fff">0,00</div>
<div class="c" style="left:1026px;top:460.5px;width:41.0px;font-size:10.6px;line-height:14px;color:#333">Adisy...</div>
<div class="c" style="left:1071px;top:460.5px;width:40.0px;font-size:10.6px;line-height:14px;color:#333">2</div>
<div class="c" style="left:1157px;top:460.5px;width:41.0px;text-align:right;font-size:10.6px;line-height:14px;color:#333">8,80</div>
<div class="c" style="left:1201px;top:460.5px;width:41.0px;text-align:right;font-size:10.6px;line-height:14px;color:#333">0,00</div>
<div class="c" style="left:1245px;top:460.5px;width:42.0px;text-align:right;font-size:10.6px;line-height:14px;color:#333">0,00</div>
<div class="c" style="left:1290px;top:460.5px;width:42.0px;text-align:right;font-size:10.6px;line-height:14px;color:#333">0,00</div>
<div class="c" style="left:1026px;top:479.0px;width:41.0px;font-size:10.6px;line-height:14px;color:#333">Adisy...</div>
<div class="c" style="left:1071px;top:479.0px;width:40.0px;font-size:10.6px;line-height:14px;color:#333">3</div>
<div class="c" style="left:1157px;top:479.0px;width:41.0px;text-align:right;font-size:10.6px;line-height:14px;color:#333">13,20</div>
<div class="c" style="left:1201px;top:479.0px;width:41.0px;text-align:right;font-size:10.6px;line-height:14px;color:#333">0,00</div>
<div class="c" style="left:1245px;top:479.0px;width:42.0px;text-align:right;font-size:10.6px;line-height:14px;color:#333">0,00</div>
<div class="c" style="left:1290px;top:479.0px;width:42.0px;text-align:right;font-size:10.6px;line-height:14px;color:#333">0,00</div>
<div class="c" style="left:1157px;top:497.5px;width:41.0px;text-align:right;font-size:10.6px;line-height:14px;color:#333">98,65</div>
<div class="c" style="left:1201px;top:497.5px;width:41.0px;text-align:right;font-size:10.6px;line-height:14px;color:#333">12,00</div>
<div class="c" style="left:1245px;top:497.5px;width:42.0px;text-align:right;font-size:10.6px;line-height:14px;color:#333">0,00</div>
<div class="c" style="left:1290px;top:497.5px;width:42.0px;text-align:right;font-size:10.6px;line-height:14px;color:#333">0,00</div>
<div class="a" style="left:176px;top:365px;width:834px;height:400px;background:linear-gradient(to right,#ffffff 0,#ffffff 167px,#fcfcfc 168px);border:1px solid #2e2e2e"></div>
<svg class="a" style="left:192px;top:384px" width="16" height="16" viewBox="0 0 16 16">
<defs><linearGradient id="ti" x1="0" y1="0" x2="1" y2="1"><stop offset="0" stop-color="#9aa6e0"/><stop offset="1" stop-color="#2b3a8e"/></linearGradient></defs>
<rect x="0.5" y="0.5" width="15" height="15" rx="1.5" fill="#1c2150" />
<rect x="2" y="2" width="12" height="12" fill="url(#ti)"/>
<path d="M4.5 3 V11 H11.5 V3" fill="none" stroke="#f0f4ff" stroke-width="1.3"/>
<path d="M6.5 3 V8.5 M9.5 3 V8.5" stroke="#cdd6ff" stroke-width="0.8"/>
</svg>
<div class="a t" style="left:212.5px;top:386.22px;font-size:12.5px;line-height:12.5px;font-weight:bold;color:#333;transform:scaleX(0.945);transform-origin:0 0">Print Preview</div>
<div class="a" style="left:938px;top:393px;width:8px;height:2px;background:#a8a8a8"></div>
<div class="a" style="left:958px;top:388px;width:10px;height:8px;border:1px solid #a8a8a8;border-top-width:2px"></div>
<svg class="a" style="left:979px;top:387px" width="10" height="10" viewBox="0 0 10 10"><path d="M1 1L9 9M9 1L1 9" stroke="#a8a8a8" stroke-width="1.2"/></svg>
<div class="a" style="left:195px;top:429px;width:1px;height:16px;background:#b8b8b8"></div>
<div class="a" style="left:197px;top:429px;width:1px;height:16px;background:#b8b8b8"></div>
<div class="a" style="left:280px;top:422px;width:1px;height:30px;background:#c4c4c4"></div>
<div class="a" style="left:362px;top:422px;width:1px;height:30px;background:#c4c4c4"></div>
<div class="a" style="left:522px;top:422px;width:1px;height:30px;background:#c4c4c4"></div>
<div class="a" style="left:721px;top:422px;width:1px;height:30px;background:#c4c4c4"></div>
<div class="a" style="left:881px;top:422px;width:1px;height:30px;background:#c4c4c4"></div>

<svg class="a" style="left:0;top:0" width="1366" height="728" viewBox="0 0 1366 728">
<defs>
 <linearGradient id="gfold" x1="0" y1="0" x2="0" y2="1"><stop offset="0" stop-color="#fde39a"/><stop offset="1" stop-color="#eca33a"/></linearGradient>
 <linearGradient id="gfold2" x1="0" y1="0" x2="0" y2="1"><stop offset="0" stop-color="#fbd77a"/><stop offset="1" stop-color="#e8962a"/></linearGradient>
 <radialGradient id="glens" cx="0.4" cy="0.35" r="0.7"><stop offset="0" stop-color="#bfe0ff"/><stop offset="0.6" stop-color="#4d8fe0"/><stop offset="1" stop-color="#2a5cb0"/></radialGradient>
 <linearGradient id="gbar" x1="0" y1="0" x2="1" y2="0"><stop offset="0" stop-color="#5b6a88"/><stop offset="0.5" stop-color="#e8eef6"/><stop offset="1" stop-color="#4a5878"/></linearGradient>
 <linearGradient id="gprn" x1="0" y1="0" x2="0" y2="1"><stop offset="0" stop-color="#f4f7fc"/><stop offset="1" stop-color="#b9c6dc"/></linearGradient>
 <linearGradient id="gmag" x1="0" y1="0" x2="0" y2="1"><stop offset="0" stop-color="#5d8fe0"/><stop offset="1" stop-color="#a9dcf5"/></linearGradient>
 <linearGradient id="gnav" x1="0" y1="0" x2="0" y2="1"><stop offset="0" stop-color="#e6f0fb"/><stop offset="1" stop-color="#c3d8f0"/></linearGradient>
 <radialGradient id="gq" cx="0.4" cy="0.3" r="0.7"><stop offset="0" stop-color="#b9f05a"/><stop offset="1" stop-color="#3f9a10"/></radialGradient>
</defs>
<!-- org chart -->
<rect x="214.5" y="423.5" width="10" height="10" rx="1.5" fill="#dceaf8" stroke="#c3d6ee"/>
<path d="M219.5 435V439.5M209.5 439.5V437.5H229.5V439.5" stroke="#a9b1c2" fill="none"/>
<rect x="205.5" y="441.5" width="8" height="8" rx="1.2" fill="#e0ecc8" stroke="#c9dcae"/>
<rect x="215.5" y="441.5" width="8" height="8" rx="1.2" fill="#e0ecc8" stroke="#c9dcae"/>
<rect x="225.5" y="441.5" width="8" height="8" rx="1.2" fill="#e0ecc8" stroke="#c9dcae"/>
<!-- binoculars -->
<path d="M244.3,440.5 L248,427.8 Q249,425 252.7,425 Q256.6,425 257.3,427.8 L258,440.5 Z" fill="url(#gbar)" stroke="#46536f" stroke-width="1"/>
<path d="M273.3,440.5 L269.6,427.8 Q268.6,425 264.9,425 Q261,425 260.3,427.8 L259.6,440.5 Z" fill="url(#gbar)" stroke="#46536f" stroke-width="1"/>
<rect x="256.5" y="431.5" width="4.6" height="7" fill="#3f4b66"/>
<circle cx="250.8" cy="440.7" r="6.6" fill="#f4f6fa" stroke="#3b4763" stroke-width="1.3"/>
<circle cx="250.8" cy="440.7" r="4.8" fill="url(#glens)" stroke="#2f58a8" stroke-width="0.6"/>
<circle cx="266.8" cy="440.7" r="6.6" fill="#f4f6fa" stroke="#3b4763" stroke-width="1.3"/>
<circle cx="266.8" cy="440.7" r="4.8" fill="url(#glens)" stroke="#2f58a8" stroke-width="0.6"/>
<!-- folder -->
<linearGradient id="gf1" x1="0" y1="0" x2="0.4" y2="1"><stop offset="0" stop-color="#fff0b8"/><stop offset="1" stop-color="#f0b04a"/></linearGradient>
<linearGradient id="gf2" x1="0" y1="0" x2="0.2" y2="1"><stop offset="0" stop-color="#ffe7a0"/><stop offset="1" stop-color="#eb9c34"/></linearGradient>
<linearGradient id="gfl" x1="0" y1="0" x2="1" y2="0"><stop offset="0" stop-color="#8d9cb8"/><stop offset="0.5" stop-color="#6f7f9e"/><stop offset="1" stop-color="#4d5a78"/></linearGradient>
<path d="M287.5,447.5 V428 Q287.5,426.5 289,426.5 H295.5 L298,429.5 H311.5 Q312.7,429.5 312.7,431 V447.5 Z" fill="url(#gf1)" stroke="#cf8628"/>
<path d="M287.5,447.5 L291.8,436.5 H301 L303.3,434.6 H316.5 L312.7,447.5 Z" fill="url(#gf2)" stroke="#cf8628" stroke-linejoin="round"/>
<!-- floppy -->
<path d="M328.5,425 Q328.5,424.2 329.5,424.2 H352.8 Q353.8,424.2 353.8,425.2 V448.9 Q353.8,449.9 352.8,449.9 H329.5 Q328.5,449.9 328.5,448.9 Z" fill="url(#gfl)" stroke="#3e4a66" stroke-width="0.9"/>
<rect x="333.2" y="424.2" width="15.2" height="9.3" fill="#3c4763"/>
<rect x="337.1" y="425.2" width="10.7" height="7.7" fill="#d5dbe6"/>
<rect x="343.1" y="426" width="3.9" height="5.8" fill="#3c4763"/>
<rect x="334.1" y="439" width="13.9" height="10.7" fill="#f6f7fa"/>
<rect x="334.1" y="446.4" width="13.9" height="3.3" fill="#64a6e6"/>
<path d="M335.5,441.4 H346.5 M335.5,443.6 H346.5" stroke="#7f8fc0" stroke-width="0.8"/>
<!-- printer ? -->
<rect x="375.5" y="424.5" width="11" height="10.5" fill="#eef1f7" stroke="#7d8db0"/>
<path d="M369.5,436.5 Q369.5,433 373,433 H392 Q395.5,433 395.5,436.5 V447 Q395.5,448.5 394,448.5 H371 Q369.5,448.5 369.5,447 Z" fill="url(#gprn)" stroke="#6f7fa3"/>
<path d="M373.2,434.5 H391.9 V438 Q391.9,440.5 389,440.5 H376 Q373.2,440.5 373.2,438 Z" fill="#46526f"/>
<rect x="375.5" y="444.5" width="14" height="6" fill="#fff" stroke="#6f7fa3"/>
<rect x="377" y="445.5" width="11" height="3.5" fill="#6aaee8"/>
<circle cx="391.6" cy="429.3" r="7.2" fill="url(#gq)" stroke="#4f9a1a" stroke-width="0.8"/>
<text x="391.8" y="433.6" font-family="Liberation Sans" font-weight="bold" font-size="11" fill="#2d5a0a" text-anchor="middle">?</text>
<!-- printer -->
<rect x="414.5" y="421.5" width="17" height="11.5" fill="#eef1f7" stroke="#7d8db0"/>
<path d="M408.5,434 Q408.5,430.5 412,430.5 H434 Q437.5,430.5 437.5,434 V446.5 Q437.5,448 436,448 H410 Q408.5,448 408.5,446.5 Z" fill="url(#gprn)" stroke="#6f7fa3"/>
<path d="M412.2,430.5 H433.6 V435.5 Q433.6,438.3 430.5,438.3 H415.3 Q412.2,438.3 412.2,435.5 Z" fill="#46526f"/>
<rect x="414.5" y="432.5" width="17" height="1" fill="#eef1f7"/>
<rect x="414.5" y="443.5" width="17" height="7" fill="#fff" stroke="#6f7fa3"/>
<rect x="416" y="444.8" width="14" height="4.2" fill="#6aaee8"/>
<!-- page setup -->
<defs><linearGradient id="ggear" x1="0" y1="0" x2="0" y2="1"><stop offset="0" stop-color="#e4e7ea"/><stop offset="1" stop-color="#9aa0a6"/></linearGradient>
<linearGradient id="gdoc" x1="0" y1="0" x2="1" y2="1"><stop offset="0" stop-color="#fbfcfe"/><stop offset="1" stop-color="#dfe8f5"/></linearGradient></defs>
<path d="M449.5,422.5 H465 L470,427.5 V446.5 H449.5 Z" fill="url(#gdoc)" stroke="#6f98dc"/>
<path d="M465,422.5 V427.5 H470" fill="#e6eefa" stroke="#6f98dc"/>
<g transform="translate(466.8,441.8) scale(0.86)">
<path d="M-1.6,-9 h3.2 l0.6,2.6 2.2,0.9 2.3,-1.4 2.3,2.3 -1.4,2.3 0.9,2.2 2.6,0.6 v3.2 l-2.6,0.6 -0.9,2.2 1.4,2.3 -2.3,2.3 -2.3,-1.4 -2.2,0.9 -0.6,2.6 h-3.2 l-0.6,-2.6 -2.2,-0.9 -2.3,1.4 -2.3,-2.3 1.4,-2.3 -0.9,-2.2 -2.6,-0.6 v-3.2 l2.6,-0.6 0.9,-2.2 -1.4,-2.3 2.3,-2.3 2.3,1.4 2.2,-0.9 z" fill="url(#ggear)" stroke="#55595e" stroke-width="1"/>
<circle r="3.2" fill="#f2f3f5" stroke="#6a6e73" stroke-width="1.3"/>
</g>
<!-- scale disabled -->
<rect x="487.5" y="423.5" width="27" height="27" rx="1.5" fill="#f3f7fc" stroke="#c9d8ee"/>
<path d="M503.5,424V450M509.5,424V450M488,438.5H514M488,444.5H514" stroke="#e1e9f5"/>
<rect x="488.5" y="424.5" width="11" height="11" fill="#dbe7f6" stroke="#bcd0ec"/>
<path d="M501.5,436.5 L509.5,444.5" stroke="#c5c7ca" stroke-width="3.2" fill="none"/>
<path d="M511.5,438.5 V446.5 H503.5 Z" fill="#c5c7ca"/>
<!-- zoom out -->
<path d="M550.5,444.5 L555.5,449.5" stroke="#b8732a" stroke-width="4.2" stroke-linecap="round"/>
<path d="M550.8,444.8 L555.2,449.2" stroke="#f6cf8a" stroke-width="1.8" stroke-linecap="round"/>
<path d="M547,441 L551,445" stroke="#3d4c7c" stroke-width="4"/>
<path d="M547.5,441.5 L550.5,444.5" stroke="#dfe6f5" stroke-width="1.2"/>
<circle cx="541" cy="434" r="10.2" fill="#f7f9fd" stroke="#5d6b92" stroke-width="1.1"/>
<circle cx="541" cy="434" r="7.6" fill="url(#gmag)" stroke="#3f62aa" stroke-width="0.9"/>
<ellipse cx="539" cy="430.5" rx="3.5" ry="2.3" fill="#ffffff" opacity="0.45"/>
<rect x="536.6" y="432.8" width="8.8" height="2.5" fill="#1c2f78"/>
<!-- zoom in -->
<path d="M706.5,444.5 L711.5,449.5" stroke="#b8732a" stroke-width="4.2" stroke-linecap="round"/>
<path d="M706.8,444.8 L711.2,449.2" stroke="#f6cf8a" stroke-width="1.8" stroke-linecap="round"/>
<path d="M703,441 L707,445" stroke="#3d4c7c" stroke-width="4"/>
<path d="M703.5,441.5 L706.5,444.5" stroke="#dfe6f5" stroke-width="1.2"/>
<circle cx="697" cy="434" r="10.2" fill="#f7f9fd" stroke="#5d6b92" stroke-width="1.1"/>
<circle cx="697" cy="434" r="7.6" fill="url(#gmag)" stroke="#3f62aa" stroke-width="0.9"/>
<ellipse cx="695" cy="430.5" rx="3.5" ry="2.3" fill="#ffffff" opacity="0.45"/>
<rect x="692.6" y="432.8" width="8.8" height="2.5" fill="#1c2f78"/>
<rect x="695.75" y="429.6" width="2.5" height="8.8" fill="#1c2f78"/>
<!-- nav -->
<rect x="732.5" y="429.5" width="2.5" height="14" fill="url(#gnav)" stroke="#b5c9e4" stroke-width="0.8"/>
<path d="M753 427 V445.5 L736.5 436.2 Z" fill="url(#gnav)" stroke="#b5c9e4"/>
<path d="M789 427 V445.5 L772.5 436.2 Z" fill="url(#gnav)" stroke="#b5c9e4"/>
<path d="M814.5 427 V445.5 L831 436.2 Z" fill="url(#gnav)" stroke="#b5c9e4"/>
<path d="M850.5 427 V445.5 L867 436.2 Z" fill="url(#gnav)" stroke="#b5c9e4"/>
<rect x="868" y="429.5" width="2.5" height="14" fill="url(#gnav)" stroke="#b5c9e4" stroke-width="0.8"/>
<!-- export -->
<path d="M892.5,422.5 H906 L913.5,430 V448.5 H892.5 Z" fill="#f4f6fb" stroke="#7f90b8"/>
<path d="M906,422.5 V430 H913.5" fill="#e3e9f5" stroke="#7f90b8"/>
<rect x="903.5" y="437" width="13.5" height="13.5" rx="1" fill="#46536f" stroke="#2e3850" stroke-width="0.7"/>
<rect x="906" y="437.5" width="8.5" height="5" fill="#dfe3ea"/>
<rect x="911.5" y="438.3" width="1.8" height="3" fill="#2e3850"/>
<rect x="905.5" y="444.5" width="10" height="5.5" fill="#f2f4f8"/>
<rect x="905.5" y="448" width="10" height="2" fill="#5aa0e0"/>
<path d="M927,436 h5.5 l-2.75,3z" fill="#222"/>
<!-- email -->
<rect x="943.5" y="426.5" width="27" height="20" rx="1.5" fill="#eef1f7" stroke="#7f90b8"/>
<path d="M944.5,446 L957,436.5 L969.5,446" fill="#e6ebf4" stroke="#c9d2e4" stroke-width="0.8"/>
<path d="M944,427.5 L957,437.5 L970,427.5" fill="#f6f8fb" stroke="#6f82b0" stroke-width="1"/>
<path d="M945,430 V445.5 H969 V430" fill="none" stroke="#d84848" stroke-width="1.3" stroke-dasharray="2 3"/>
<path d="M945,430 V445.5 H969 V430" fill="none" stroke="#5a78c0" stroke-width="1.3" stroke-dasharray="2 3" stroke-dashoffset="2.5"/>
<path d="M981,436 h5.5 l-2.75,3z" fill="#222"/>
</svg>

<div class="a" style="left:572px;top:426px;width:100px;height:22px;background:#fff;border:1px solid #c8c8c8"></div>
<div class="a" style="left:654px;top:427px;width:1px;height:20px;background:#d0d0d0"></div>
<div class="a" style="left:660.5px;top:436px;width:0;height:0;border-left:3px solid transparent;border-right:3px solid transparent;border-top:3px solid #333"></div>
<div class="a t" style="left:577.5px;top:432.14px;font-size:12px;line-height:12px;color:#222;letter-spacing:-0.2px">100%</div>
<div class="a" style="left:212px;top:458px;width:8px;height:270px;background:#b9b9b9"></div>
<div class="a" style="left:977px;top:458px;width:1px;height:270px;background:#c8c8c8"></div>
<div class="a" style="left:983px;top:464px;width:0;height:0;border-left:3.5px solid transparent;border-right:3.5px solid transparent;border-bottom:3.5px solid #c8c8c8"></div>
<div class="a" style="left:982px;top:509px;width:8px;height:54px;background:#b9b9b9"></div>
<div class="a" style="left:317px;top:507px;width:622.0px;height:20.0px;background:#c3c3c3"></div>
<div class="a" style="left:317px;top:527px;width:622.0px;height:189.9px;background:#fff"></div>
<div class="pl" style="left:316px;top:506px;width:624px;height:1px"></div>
<div class="pl" style="left:316px;top:527px;width:624px;height:1px"></div>
<div class="pl" style="left:316px;top:548px;width:624px;height:1px"></div>
<div class="pl" style="left:316px;top:569px;width:624px;height:1px"></div>
<div class="pl" style="left:316px;top:590px;width:624px;height:1px"></div>
<div class="pl" style="left:316px;top:611px;width:624px;height:1px"></div>
<div class="pl" style="left:316px;top:632px;width:624px;height:1px"></div>
<div class="pl" style="left:316px;top:654px;width:624px;height:1px"></div>
<div class="pl" style="left:316px;top:675px;width:624px;height:1px"></div>
<div class="pl" style="left:316px;top:696px;width:624px;height:1px"></div>
<div class="pl" style="left:316px;top:717px;width:624px;height:1px"></div>
<div class="pl" style="left:316px;top:506px;width:1px;height:212px"></div>
<div class="pl" style="left:348px;top:506px;width:1px;height:212px"></div>
<div class="pl" style="left:389px;top:506px;width:1px;height:212px"></div>
<div class="pl" style="left:424px;top:506px;width:1px;height:212px"></div>
<div class="pl" style="left:469px;top:506px;width:1px;height:212px"></div>
<div class="pl" style="left:493px;top:506px;width:1px;height:212px"></div>
<div class="pl" style="left:544px;top:506px;width:1px;height:212px"></div>
<div class="pl" style="left:569px;top:506px;width:1px;height:212px"></div>
<div class="pl" style="left:594px;top:506px;width:1px;height:212px"></div>
<div class="pl" style="left:625px;top:506px;width:1px;height:212px"></div>
<div class="pl" style="left:659px;top:506px;width:1px;height:212px"></div>
<div class="pl" style="left:690px;top:506px;width:1px;height:212px"></div>
<div class="pl" style="left:721px;top:506px;width:1px;height:212px"></div>
<div class="pl" style="left:747px;top:506px;width:1px;height:212px"></div>
<div class="pl" style="left:775px;top:506px;width:1px;height:212px"></div>
<div class="pl" style="left:796px;top:506px;width:1px;height:212px"></div>
<div class="pl" style="left:824px;top:506px;width:1px;height:212px"></div>
<div class="pl" style="left:848px;top:506px;width:1px;height:212px"></div>
<div class="pl" style="left:879px;top:506px;width:1px;height:212px"></div>
<div class="pl" style="left:909px;top:506px;width:1px;height:212px"></div>
<div class="pl" style="left:939px;top:506px;width:1px;height:212px"></div>
<div class="c" style="left:319.5px;top:509.5px;width:27.5px;height:15px;font-size:12px;letter-spacing:-0.3px;line-height:15px;color:#111">No</div>
<div class="c" style="left:351.5px;top:509.5px;width:36.5px;height:15px;font-size:12px;letter-spacing:-0.3px;line-height:15px;color:#111">Tarih</div>
<div class="c" style="left:392.5px;top:509.5px;width:30.5px;height:15px;font-size:12px;letter-spacing:-0.3px;line-height:15px;color:#111">Saat</div>
<div class="c" style="left:427.5px;top:509.5px;width:40.5px;height:15px;font-size:12px;letter-spacing:-0.3px;line-height:15px;color:#111">DPT</div>
<div class="c" style="left:472.5px;top:509.5px;width:19.5px;height:15px;font-size:12px;letter-spacing:-0.3px;line-height:15px;color:#111">Masa</div>
<div class="c" style="left:496.5px;top:509.5px;width:46.5px;height:15px;font-size:12px;letter-spacing:-0.3px;line-height:15px;color:#111">Mşt</div>
<div class="c" style="left:547.5px;top:509.5px;width:20.5px;height:15px;font-size:12px;letter-spacing:-0.3px;line-height:15px;color:#111">Nakit</div>
<div class="c" style="left:572.5px;top:509.5px;width:20.5px;height:15px;font-size:12px;letter-spacing:-0.3px;line-height:15px;color:#111">KKart</div>
<div class="c" style="left:597.5px;top:509.5px;width:26.5px;height:15px;font-size:12px;letter-spacing:-0.3px;line-height:15px;color:#111">YSepeti</div>
<div class="c" style="left:628.5px;top:509.5px;width:29.5px;height:15px;font-size:12px;letter-spacing:-0.3px;line-height:15px;color:#111">Multinet</div>
<div class="c" style="left:662.5px;top:509.5px;width:26.5px;height:15px;font-size:12px;letter-spacing:-0.3px;line-height:15px;color:#111">Setcard</div>
<div class="c" style="left:693.5px;top:509.5px;width:26.5px;height:15px;font-size:12px;letter-spacing:-0.3px;line-height:15px;color:#111">Sodexo</div>
<div class="c" style="left:724.5px;top:509.5px;width:21.5px;height:15px;font-size:12px;letter-spacing:-0.3px;line-height:15px;color:#111">Ticket</div>
<div class="c" style="left:750.5px;top:509.5px;width:23.5px;height:15px;font-size:12px;letter-spacing:-0.3px;line-height:15px;color:#111">Online</div>
<div class="c" style="left:778.5px;top:509.5px;width:16.5px;height:15px;font-size:12px;letter-spacing:-0.3px;line-height:15px;color:#111">Cari</div>
<div class="c" style="left:799.5px;top:509.5px;width:23.5px;height:15px;font-size:12px;letter-spacing:-0.3px;line-height:15px;color:#111">B.Top</div>
<div class="c" style="left:827.5px;top:509.5px;width:19.5px;height:15px;font-size:12px;letter-spacing:-0.3px;line-height:15px;color:#111">Vergi</div>
<div class="c" style="left:851.5px;top:509.5px;width:26.5px;height:15px;font-size:12px;letter-spacing:-0.3px;line-height:15px;color:#111">İskonto</div>
<div class="c" style="left:882.5px;top:509.5px;width:25.5px;height:15px;font-size:12px;letter-spacing:-0.3px;line-height:15px;color:#111">Yuvarla</div>
<div class="c" style="left:912.5px;top:509.5px;width:25.5px;height:15px;font-size:12px;letter-spacing:-0.3px;line-height:15px;color:#111">Toplam</div>
<div class="c" style="left:319.5px;top:530.5px;width:27.5px;height:15px;font-size:12px;letter-spacing:-0.3px;line-height:15px;color:#111">1</div>
<div class="c" style="left:351.5px;top:530.5px;width:36.5px;height:15px;font-size:12px;letter-spacing:-0.3px;line-height:15px;color:#111">31.10.2017</div>
<div class="c" style="left:392.5px;top:530.5px;width:30.5px;height:15px;font-size:12px;letter-spacing:-0.3px;line-height:15px;color:#111">16:03:30</div>
<div class="c" style="left:427.5px;top:530.5px;width:40.5px;height:15px;font-size:12px;letter-spacing:-0.3px;line-height:15px;color:#111">Adisyon</div>
<div class="c" style="left:472.5px;top:530.5px;width:19.5px;height:15px;font-size:12px;letter-spacing:-0.3px;line-height:15px;color:#111">2</div>
<div class="c" style="left:546.0px;top:530.5px;width:21.0px;height:15px;display:flex;justify-content:safe flex-end;font-size:12px;letter-spacing:-0.3px;line-height:15px;color:#111"><span>23,65</span></div>
<div class="c" style="left:571.0px;top:530.5px;width:21.0px;height:15px;display:flex;justify-content:safe flex-end;font-size:12px;letter-spacing:-0.3px;line-height:15px;color:#111"><span>0,00</span></div>
<div class="c" style="left:596.0px;top:530.5px;width:27.0px;height:15px;display:flex;justify-content:safe flex-end;font-size:12px;letter-spacing:-0.3px;line-height:15px;color:#111"><span>0,00</span></div>
<div class="c" style="left:627.0px;top:530.5px;width:30.0px;height:15px;display:flex;justify-content:safe flex-end;font-size:12px;letter-spacing:-0.3px;line-height:15px;color:#111"><span>0,00</span></div>
<div class="c" style="left:661.0px;top:530.5px;width:27.0px;height:15px;display:flex;justify-content:safe flex-end;font-size:12px;letter-spacing:-0.3px;line-height:15px;color:#111"><span>0,00</span></div>
<div class="c" style="left:692.0px;top:530.5px;width:27.0px;height:15px;display:flex;justify-content:safe flex-end;font-size:12px;letter-spacing:-0.3px;line-height:15px;color:#111"><span>0,00</span></div>
<div class="c" style="left:723.0px;top:530.5px;width:22.0px;height:15px;display:flex;justify-content:safe flex-end;font-size:12px;letter-spacing:-0.3px;line-height:15px;color:#111"><span>0,00</span></div>
<div class="c" style="left:749.0px;top:530.5px;width:24.0px;height:15px;display:flex;justify-content:safe flex-end;font-size:12px;letter-spacing:-0.3px;line-height:15px;color:#111"><span>0,00</span></div>
<div class="c" style="left:777.0px;top:530.5px;width:17.0px;height:15px;display:flex;justify-content:safe flex-end;font-size:12px;letter-spacing:-0.3px;line-height:15px;color:#111"><span>0,00</span></div>
<div class="c" style="left:798.0px;top:530.5px;width:24.0px;height:15px;display:flex;justify-content:safe flex-end;font-size:12px;letter-spacing:-0.3px;line-height:15px;color:#111"><span>23,65</span></div>
<div class="c" style="left:826.0px;top:530.5px;width:20.0px;height:15px;display:flex;justify-content:safe flex-end;font-size:12px;letter-spacing:-0.3px;line-height:15px;color:#111"><span>0,00</span></div>
<div class="c" style="left:850.0px;top:530.5px;width:27.0px;height:15px;display:flex;justify-content:safe flex-end;font-size:12px;letter-spacing:-0.3px;line-height:15px;color:#111"><span>0,00</span></div>
<div class="c" style="left:881.0px;top:530.5px;width:26.0px;height:15px;display:flex;justify-content:safe flex-end;font-size:12px;letter-spacing:-0.3px;line-height:15px;color:#111"><span>0,00</span></div>
<div class="c" style="left:911.0px;top:530.5px;width:26.0px;height:15px;display:flex;justify-content:safe flex-end;font-size:12px;letter-spacing:-0.3px;line-height:15px;color:#111"><span>23,65</span></div>
<div class="c" style="left:319.5px;top:551.6px;width:27.5px;height:15px;font-size:12px;letter-spacing:-0.3px;line-height:15px;color:#111">2</div>
<div class="c" style="left:351.5px;top:551.6px;width:36.5px;height:15px;font-size:12px;letter-spacing:-0.3px;line-height:15px;color:#111">31.10.2017</div>
<div class="c" style="left:392.5px;top:551.6px;width:30.5px;height:15px;font-size:12px;letter-spacing:-0.3px;line-height:15px;color:#111">16:32:17</div>
<div class="c" style="left:427.5px;top:551.6px;width:40.5px;height:15px;font-size:12px;letter-spacing:-0.3px;line-height:15px;color:#111">Paket Servis</div>
<div class="c" style="left:496.5px;top:551.6px;width:46.5px;height:15px;font-size:12px;letter-spacing:-0.3px;line-height:15px;color:#111">İsa AKKAYA</div>
<div class="c" style="left:546.0px;top:551.6px;width:21.0px;height:15px;display:flex;justify-content:safe flex-end;font-size:12px;letter-spacing:-0.3px;line-height:15px;color:#111"><span>15,00</span></div>
<div class="c" style="left:571.0px;top:551.6px;width:21.0px;height:15px;display:flex;justify-content:safe flex-end;font-size:12px;letter-spacing:-0.3px;line-height:15px;color:#111"><span>0,00</span></div>
<div class="c" style="left:596.0px;top:551.6px;width:27.0px;height:15px;display:flex;justify-content:safe flex-end;font-size:12px;letter-spacing:-0.3px;line-height:15px;color:#111"><span>0,00</span></div>
<div class="c" style="left:627.0px;top:551.6px;width:30.0px;height:15px;display:flex;justify-content:safe flex-end;font-size:12px;letter-spacing:-0.3px;line-height:15px;color:#111"><span>0,00</span></div>
<div class="c" style="left:661.0px;top:551.6px;width:27.0px;height:15px;display:flex;justify-content:safe flex-end;font-size:12px;letter-spacing:-0.3px;line-height:15px;color:#111"><span>0,00</span></div>
<div class="c" style="left:692.0px;top:551.6px;width:27.0px;height:15px;display:flex;justify-content:safe flex-end;font-size:12px;letter-spacing:-0.3px;line-height:15px;color:#111"><span>0,00</span></div>
<div class="c" style="left:723.0px;top:551.6px;width:22.0px;height:15px;display:flex;justify-content:safe flex-end;font-size:12px;letter-spacing:-0.3px;line-height:15px;color:#111"><span>0,00</span></div>
<div class="c" style="left:749.0px;top:551.6px;width:24.0px;height:15px;display:flex;justify-content:safe flex-end;font-size:12px;letter-spacing:-0.3px;line-height:15px;color:#111"><span>0,00</span></div>
<div class="c" style="left:777.0px;top:551.6px;width:17.0px;height:15px;display:flex;justify-content:safe flex-end;font-size:12px;letter-spacing:-0.3px;line-height:15px;color:#111"><span>0,00</span></div>
<div class="c" style="left:798.0px;top:551.6px;width:24.0px;height:15px;display:flex;justify-content:safe flex-end;font-size:12px;letter-spacing:-0.3px;line-height:15px;color:#111"><span>15,00</span></div>
<div class="c" style="left:826.0px;top:551.6px;width:20.0px;height:15px;display:flex;justify-content:safe flex-end;font-size:12px;letter-spacing:-0.3px;line-height:15px;color:#111"><span>0,00</span></div>
<div class="c" style="left:850.0px;top:551.6px;width:27.0px;height:15px;display:flex;justify-content:safe flex-end;font-size:12px;letter-spacing:-0.3px;line-height:15px;color:#111"><span>0,00</span></div>
<div class="c" style="left:881.0px;top:551.6px;width:26.0px;height:15px;display:flex;justify-content:safe flex-end;font-size:12px;letter-spacing:-0.3px;line-height:15px;color:#111"><span>0,00</span></div>
<div class="c" style="left:911.0px;top:551.6px;width:26.0px;height:15px;display:flex;justify-content:safe flex-end;font-size:12px;letter-spacing:-0.3px;line-height:15px;color:#111"><span>15,00</span></div>
<div class="c" style="left:319.5px;top:572.7px;width:27.5px;height:15px;font-size:12px;letter-spacing:-0.3px;line-height:15px;color:#111">3</div>
<div class="c" style="left:351.5px;top:572.7px;width:36.5px;height:15px;font-size:12px;letter-spacing:-0.3px;line-height:15px;color:#111">31.10.2017</div>
<div class="c" style="left:392.5px;top:572.7px;width:30.5px;height:15px;font-size:12px;letter-spacing:-0.3px;line-height:15px;color:#111">16:42:02</div>
<div class="c" style="left:427.5px;top:572.7px;width:40.5px;height:15px;font-size:12px;letter-spacing:-0.3px;line-height:15px;color:#111">Paket Servis</div>
<div class="c" style="left:496.5px;top:572.7px;width:46.5px;height:15px;font-size:12px;letter-spacing:-0.3px;line-height:15px;color:#111">Tayfun Yıldız</div>
<div class="c" style="left:546.0px;top:572.7px;width:21.0px;height:15px;display:flex;justify-content:safe flex-end;font-size:12px;letter-spacing:-0.3px;line-height:15px;color:#111"><span>0,00</span></div>
<div class="c" style="left:571.0px;top:572.7px;width:21.0px;height:15px;display:flex;justify-content:safe flex-end;font-size:12px;letter-spacing:-0.3px;line-height:15px;color:#111"><span>12,00</span></div>
<div class="c" style="left:596.0px;top:572.7px;width:27.0px;height:15px;display:flex;justify-content:safe flex-end;font-size:12px;letter-spacing:-0.3px;line-height:15px;color:#111"><span>0,00</span></div>
<div class="c" style="left:627.0px;top:572.7px;width:30.0px;height:15px;display:flex;justify-content:safe flex-end;font-size:12px;letter-spacing:-0.3px;line-height:15px;color:#111"><span>0,00</span></div>
<div class="c" style="left:661.0px;top:572.7px;width:27.0px;height:15px;display:flex;justify-content:safe flex-end;font-size:12px;letter-spacing:-0.3px;line-height:15px;color:#111"><span>0,00</span></div>
<div class="c" style="left:692.0px;top:572.7px;width:27.0px;height:15px;display:flex;justify-content:safe flex-end;font-size:12px;letter-spacing:-0.3px;line-height:15px;color:#111"><span>0,00</span></div>
<div class="c" style="left:723.0px;top:572.7px;width:22.0px;height:15px;display:flex;justify-content:safe flex-end;font-size:12px;letter-spacing:-0.3px;line-height:15px;color:#111"><span>0,00</span></div>
<div class="c" style="left:749.0px;top:572.7px;width:24.0px;height:15px;display:flex;justify-content:safe flex-end;font-size:12px;letter-spacing:-0.3px;line-height:15px;color:#111"><span>0,00</span></div>
<div class="c" style="left:777.0px;top:572.7px;width:17.0px;height:15px;display:flex;justify-content:safe flex-end;font-size:12px;letter-spacing:-0.3px;line-height:15px;color:#111"><span>0,00</span></div>
<div class="c" style="left:798.0px;top:572.7px;width:24.0px;height:15px;display:flex;justify-content:safe flex-end;font-size:12px;letter-spacing:-0.3px;line-height:15px;color:#111"><span>12,00</span></div>
<div class="c" style="left:826.0px;top:572.7px;width:20.0px;height:15px;display:flex;justify-content:safe flex-end;font-size:12px;letter-spacing:-0.3px;line-height:15px;color:#111"><span>0,00</span></div>
<div class="c" style="left:850.0px;top:572.7px;width:27.0px;height:15px;display:flex;justify-content:safe flex-end;font-size:12px;letter-spacing:-0.3px;line-height:15px;color:#111"><span>0,00</span></div>
<div class="c" style="left:881.0px;top:572.7px;width:26.0px;height:15px;display:flex;justify-content:safe flex-end;font-size:12px;letter-spacing:-0.3px;line-height:15px;color:#111"><span>0,00</span></div>
<div class="c" style="left:911.0px;top:572.7px;width:26.0px;height:15px;display:flex;justify-content:safe flex-end;font-size:12px;letter-spacing:-0.3px;line-height:15px;color:#111"><span>12,00</span></div>
<div class="c" style="left:319.5px;top:593.8px;width:27.5px;height:15px;font-size:12px;letter-spacing:-0.3px;line-height:15px;color:#111">4</div>
<div class="c" style="left:351.5px;top:593.8px;width:36.5px;height:15px;font-size:12px;letter-spacing:-0.3px;line-height:15px;color:#111">31.10.2017</div>
<div class="c" style="left:392.5px;top:593.8px;width:30.5px;height:15px;font-size:12px;letter-spacing:-0.3px;line-height:15px;color:#111">16:42:20</div>
<div class="c" style="left:427.5px;top:593.8px;width:40.5px;height:15px;font-size:12px;letter-spacing:-0.3px;line-height:15px;color:#111">Paket Servis</div>
<div class="c" style="left:496.5px;top:593.8px;width:46.5px;height:15px;font-size:12px;letter-spacing:-0.3px;line-height:15px;color:#111">Veysel SAVAŞ</div>
<div class="c" style="left:546.0px;top:593.8px;width:21.0px;height:15px;display:flex;justify-content:safe flex-end;font-size:12px;letter-spacing:-0.3px;line-height:15px;color:#111"><span>38,00</span></div>
<div class="c" style="left:571.0px;top:593.8px;width:21.0px;height:15px;display:flex;justify-content:safe flex-end;font-size:12px;letter-spacing:-0.3px;line-height:15px;color:#111"><span>0,00</span></div>
<div class="c" style="left:596.0px;top:593.8px;width:27.0px;height:15px;display:flex;justify-content:safe flex-end;font-size:12px;letter-spacing:-0.3px;line-height:15px;color:#111"><span>0,00</span></div>
<div class="c" style="left:627.0px;top:593.8px;width:30.0px;height:15px;display:flex;justify-content:safe flex-end;font-size:12px;letter-spacing:-0.3px;line-height:15px;color:#111"><span>0,00</span></div>
<div class="c" style="left:661.0px;top:593.8px;width:27.0px;height:15px;display:flex;justify-content:safe flex-end;font-size:12px;letter-spacing:-0.3px;line-height:15px;color:#111"><span>0,00</span></div>
<div class="c" style="left:692.0px;top:593.8px;width:27.0px;height:15px;display:flex;justify-content:safe flex-end;font-size:12px;letter-spacing:-0.3px;line-height:15px;color:#111"><span>0,00</span></div>
<div class="c" style="left:723.0px;top:593.8px;width:22.0px;height:15px;display:flex;justify-content:safe flex-end;font-size:12px;letter-spacing:-0.3px;line-height:15px;color:#111"><span>0,00</span></div>
<div class="c" style="left:749.0px;top:593.8px;width:24.0px;height:15px;display:flex;justify-content:safe flex-end;font-size:12px;letter-spacing:-0.3px;line-height:15px;color:#111"><span>0,00</span></div>
<div class="c" style="left:777.0px;top:593.8px;width:17.0px;height:15px;display:flex;justify-content:safe flex-end;font-size:12px;letter-spacing:-0.3px;line-height:15px;color:#111"><span>0,00</span></div>
<div class="c" style="left:798.0px;top:593.8px;width:24.0px;height:15px;display:flex;justify-content:safe flex-end;font-size:12px;letter-spacing:-0.3px;line-height:15px;color:#111"><span>38,00</span></div>
<div class="c" style="left:826.0px;top:593.8px;width:20.0px;height:15px;display:flex;justify-content:safe flex-end;font-size:12px;letter-spacing:-0.3px;line-height:15px;color:#111"><span>0,00</span></div>
<div class="c" style="left:850.0px;top:593.8px;width:27.0px;height:15px;display:flex;justify-content:safe flex-end;font-size:12px;letter-spacing:-0.3px;line-height:15px;color:#111"><span>0,00</span></div>
<div class="c" style="left:881.0px;top:593.8px;width:26.0px;height:15px;display:flex;justify-content:safe flex-end;font-size:12px;letter-spacing:-0.3px;line-height:15px;color:#111"><span>0,00</span></div>
<div class="c" style="left:911.0px;top:593.8px;width:26.0px;height:15px;display:flex;justify-content:safe flex-end;font-size:12px;letter-spacing:-0.3px;line-height:15px;color:#111"><span>38,00</span></div>
<div class="c" style="left:319.5px;top:614.9px;width:27.5px;height:15px;font-size:12px;letter-spacing:-0.3px;line-height:15px;color:#111">5</div>
<div class="c" style="left:351.5px;top:614.9px;width:36.5px;height:15px;font-size:12px;letter-spacing:-0.3px;line-height:15px;color:#111">31.10.2017</div>
<div class="c" style="left:392.5px;top:614.9px;width:30.5px;height:15px;font-size:12px;letter-spacing:-0.3px;line-height:15px;color:#111">16:51:34</div>
<div class="c" style="left:427.5px;top:614.9px;width:40.5px;height:15px;font-size:12px;letter-spacing:-0.3px;line-height:15px;color:#111">Adisyon</div>
<div class="c" style="left:472.5px;top:614.9px;width:19.5px;height:15px;font-size:12px;letter-spacing:-0.3px;line-height:15px;color:#111">2</div>
<div class="c" style="left:546.0px;top:614.9px;width:21.0px;height:15px;display:flex;justify-content:safe flex-end;font-size:12px;letter-spacing:-0.3px;line-height:15px;color:#111"><span>8,80</span></div>
<div class="c" style="left:571.0px;top:614.9px;width:21.0px;height:15px;display:flex;justify-content:safe flex-end;font-size:12px;letter-spacing:-0.3px;line-height:15px;color:#111"><span>0,00</span></div>
<div class="c" style="left:596.0px;top:614.9px;width:27.0px;height:15px;display:flex;justify-content:safe flex-end;font-size:12px;letter-spacing:-0.3px;line-height:15px;color:#111"><span>0,00</span></div>
<div class="c" style="left:627.0px;top:614.9px;width:30.0px;height:15px;display:flex;justify-content:safe flex-end;font-size:12px;letter-spacing:-0.3px;line-height:15px;color:#111"><span>0,00</span></div>
<div class="c" style="left:661.0px;top:614.9px;width:27.0px;height:15px;display:flex;justify-content:safe flex-end;font-size:12px;letter-spacing:-0.3px;line-height:15px;color:#111"><span>0,00</span></div>
<div class="c" style="left:692.0px;top:614.9px;width:27.0px;height:15px;display:flex;justify-content:safe flex-end;font-size:12px;letter-spacing:-0.3px;line-height:15px;color:#111"><span>0,00</span></div>
<div class="c" style="left:723.0px;top:614.9px;width:22.0px;height:15px;display:flex;justify-content:safe flex-end;font-size:12px;letter-spacing:-0.3px;line-height:15px;color:#111"><span>0,00</span></div>
<div class="c" style="left:749.0px;top:614.9px;width:24.0px;height:15px;display:flex;justify-content:safe flex-end;font-size:12px;letter-spacing:-0.3px;line-height:15px;color:#111"><span>0,00</span></div>
<div class="c" style="left:777.0px;top:614.9px;width:17.0px;height:15px;display:flex;justify-content:safe flex-end;font-size:12px;letter-spacing:-0.3px;line-height:15px;color:#111"><span>0,00</span></div>
<div class="c" style="left:798.0px;top:614.9px;width:24.0px;height:15px;display:flex;justify-content:safe flex-end;font-size:12px;letter-spacing:-0.3px;line-height:15px;color:#111"><span>8,80</span></div>
<div class="c" style="left:826.0px;top:614.9px;width:20.0px;height:15px;display:flex;justify-content:safe flex-end;font-size:12px;letter-spacing:-0.3px;line-height:15px;color:#111"><span>0,00</span></div>
<div class="c" style="left:850.0px;top:614.9px;width:27.0px;height:15px;display:flex;justify-content:safe flex-end;font-size:12px;letter-spacing:-0.3px;line-height:15px;color:#111"><span>0,00</span></div>
<div class="c" style="left:881.0px;top:614.9px;width:26.0px;height:15px;display:flex;justify-content:safe flex-end;font-size:12px;letter-spacing:-0.3px;line-height:15px;color:#111"><span>0,00</span></div>
<div class="c" style="left:911.0px;top:614.9px;width:26.0px;height:15px;display:flex;justify-content:safe flex-end;font-size:12px;letter-spacing:-0.3px;line-height:15px;color:#111"><span>8,80</span></div>
<div class="c" style="left:319.5px;top:636.0px;width:27.5px;height:15px;font-size:12px;letter-spacing:-0.3px;line-height:15px;color:#111">6</div>
<div class="c" style="left:351.5px;top:636.0px;width:36.5px;height:15px;font-size:12px;letter-spacing:-0.3px;line-height:15px;color:#111">31.10.2017</div>
<div class="c" style="left:392.5px;top:636.0px;width:30.5px;height:15px;font-size:12px;letter-spacing:-0.3px;line-height:15px;color:#111">16:52:07</div>
<div class="c" style="left:427.5px;top:636.0px;width:40.5px;height:15px;font-size:12px;letter-spacing:-0.3px;line-height:15px;color:#111">Adisyon</div>
<div class="c" style="left:472.5px;top:636.0px;width:19.5px;height:15px;font-size:12px;letter-spacing:-0.3px;line-height:15px;color:#111">3</div>
<div class="c" style="left:546.0px;top:636.0px;width:21.0px;height:15px;display:flex;justify-content:safe flex-end;font-size:12px;letter-spacing:-0.3px;line-height:15px;color:#111"><span>13,20</span></div>
<div class="c" style="left:571.0px;top:636.0px;width:21.0px;height:15px;display:flex;justify-content:safe flex-end;font-size:12px;letter-spacing:-0.3px;line-height:15px;color:#111"><span>0,00</span></div>
<div class="c" style="left:596.0px;top:636.0px;width:27.0px;height:15px;display:flex;justify-content:safe flex-end;font-size:12px;letter-spacing:-0.3px;line-height:15px;color:#111"><span>0,00</span></div>
<div class="c" style="left:627.0px;top:636.0px;width:30.0px;height:15px;display:flex;justify-content:safe flex-end;font-size:12px;letter-spacing:-0.3px;line-height:15px;color:#111"><span>0,00</span></div>
<div class="c" style="left:661.0px;top:636.0px;width:27.0px;height:15px;display:flex;justify-content:safe flex-end;font-size:12px;letter-spacing:-0.3px;line-height:15px;color:#111"><span>0,00</span></div>
<div class="c" style="left:692.0px;top:636.0px;width:27.0px;height:15px;display:flex;justify-content:safe flex-end;font-size:12px;letter-spacing:-0.3px;line-height:15px;color:#111"><span>0,00</span></div>
<div class="c" style="left:723.0px;top:636.0px;width:22.0px;height:15px;display:flex;justify-content:safe flex-end;font-size:12px;letter-spacing:-0.3px;line-height:15px;color:#111"><span>0,00</span></div>
<div class="c" style="left:749.0px;top:636.0px;width:24.0px;height:15px;display:flex;justify-content:safe flex-end;font-size:12px;letter-spacing:-0.3px;line-height:15px;color:#111"><span>0,00</span></div>
<div class="c" style="left:777.0px;top:636.0px;width:17.0px;height:15px;display:flex;justify-content:safe flex-end;font-size:12px;letter-spacing:-0.3px;line-height:15px;color:#111"><span>0,00</span></div>
<div class="c" style="left:798.0px;top:636.0px;width:24.0px;height:15px;display:flex;justify-content:safe flex-end;font-size:12px;letter-spacing:-0.3px;line-height:15px;color:#111"><span>13,20</span></div>
<div class="c" style="left:826.0px;top:636.0px;width:20.0px;height:15px;display:flex;justify-content:safe flex-end;font-size:12px;letter-spacing:-0.3px;line-height:15px;color:#111"><span>0,00</span></div>
<div class="c" style="left:850.0px;top:636.0px;width:27.0px;height:15px;display:flex;justify-content:safe flex-end;font-size:12px;letter-spacing:-0.3px;line-height:15px;color:#111"><span>0,00</span></div>
<div class="c" style="left:881.0px;top:636.0px;width:26.0px;height:15px;display:flex;justify-content:safe flex-end;font-size:12px;letter-spacing:-0.3px;line-height:15px;color:#111"><span>0,00</span></div>
<div class="c" style="left:911.0px;top:636.0px;width:26.0px;height:15px;display:flex;justify-content:safe flex-end;font-size:12px;letter-spacing:-0.3px;line-height:15px;color:#111"><span>13,20</span></div>
<div class="c" style="left:319.5px;top:657.1px;width:27.5px;height:15px;font-size:12px;letter-spacing:-0.3px;line-height:15px;color:#111">7</div>
<div class="c" style="left:351.5px;top:657.1px;width:36.5px;height:15px;font-size:12px;letter-spacing:-0.3px;line-height:15px;color:#111">01.11.2017</div>
<div class="c" style="left:392.5px;top:657.1px;width:30.5px;height:15px;font-size:12px;letter-spacing:-0.3px;line-height:15px;color:#111">12:42:17</div>
<div class="c" style="left:427.5px;top:657.1px;width:40.5px;height:15px;font-size:12px;letter-spacing:-0.3px;line-height:15px;color:#111">Adisyon</div>
<div class="c" style="left:472.5px;top:657.1px;width:19.5px;height:15px;font-size:12px;letter-spacing:-0.3px;line-height:15px;color:#111">1</div>
<div class="c" style="left:546.0px;top:657.1px;width:21.0px;height:15px;display:flex;justify-content:safe flex-end;font-size:12px;letter-spacing:-0.3px;line-height:15px;color:#111"><span>0,00</span></div>
<div class="c" style="left:571.0px;top:657.1px;width:21.0px;height:15px;display:flex;justify-content:safe flex-end;font-size:12px;letter-spacing:-0.3px;line-height:15px;color:#111"><span>0,00</span></div>
<div class="c" style="left:596.0px;top:657.1px;width:27.0px;height:15px;display:flex;justify-content:safe flex-end;font-size:12px;letter-spacing:-0.3px;line-height:15px;color:#111"><span>0,00</span></div>
<div class="c" style="left:627.0px;top:657.1px;width:30.0px;height:15px;display:flex;justify-content:safe flex-end;font-size:12px;letter-spacing:-0.3px;line-height:15px;color:#111"><span>0,00</span></div>
<div class="c" style="left:661.0px;top:657.1px;width:27.0px;height:15px;display:flex;justify-content:safe flex-end;font-size:12px;letter-spacing:-0.3px;line-height:15px;color:#111"><span>0,00</span></div>
<div class="c" style="left:692.0px;top:657.1px;width:27.0px;height:15px;display:flex;justify-content:safe flex-end;font-size:12px;letter-spacing:-0.3px;line-height:15px;color:#111"><span>0,00</span></div>
<div class="c" style="left:723.0px;top:657.1px;width:22.0px;height:15px;display:flex;justify-content:safe flex-end;font-size:12px;letter-spacing:-0.3px;line-height:15px;color:#111"><span>0,00</span></div>
<div class="c" style="left:749.0px;top:657.1px;width:24.0px;height:15px;display:flex;justify-content:safe flex-end;font-size:12px;letter-spacing:-0.3px;line-height:15px;color:#111"><span>0,00</span></div>
<div class="c" style="left:777.0px;top:657.1px;width:17.0px;height:15px;display:flex;justify-content:safe flex-end;font-size:12px;letter-spacing:-0.3px;line-height:15px;color:#111"><span>0,00</span></div>
<div class="c" style="left:798.0px;top:657.1px;width:24.0px;height:15px;display:flex;justify-content:safe flex-end;font-size:12px;letter-spacing:-0.3px;line-height:15px;color:#111"><span>6,00</span></div>
<div class="c" style="left:826.0px;top:657.1px;width:20.0px;height:15px;display:flex;justify-content:safe flex-end;font-size:12px;letter-spacing:-0.3px;line-height:15px;color:#111"><span>0,00</span></div>
<div class="c" style="left:850.0px;top:657.1px;width:27.0px;height:15px;display:flex;justify-content:safe flex-end;font-size:12px;letter-spacing:-0.3px;line-height:15px;color:#111"><span>0,00</span></div>
<div class="c" style="left:881.0px;top:657.1px;width:26.0px;height:15px;display:flex;justify-content:safe flex-end;font-size:12px;letter-spacing:-0.3px;line-height:15px;color:#111"><span>0,00</span></div>
<div class="c" style="left:911.0px;top:657.1px;width:26.0px;height:15px;display:flex;justify-content:safe flex-end;font-size:12px;letter-spacing:-0.3px;line-height:15px;color:#111"><span>6,00</span></div>
<div class="c" style="left:319.5px;top:678.2px;width:27.5px;height:15px;font-size:12px;letter-spacing:-0.3px;line-height:15px;color:#111">8</div>
<div class="c" style="left:351.5px;top:678.2px;width:36.5px;height:15px;font-size:12px;letter-spacing:-0.3px;line-height:15px;color:#111">01.11.2017</div>
<div class="c" style="left:392.5px;top:678.2px;width:30.5px;height:15px;font-size:12px;letter-spacing:-0.3px;line-height:15px;color:#111">12:44:32</div>
<div class="c" style="left:427.5px;top:678.2px;width:40.5px;height:15px;font-size:12px;letter-spacing:-0.3px;line-height:15px;color:#111">Adisyon</div>
<div class="c" style="left:472.5px;top:678.2px;width:19.5px;height:15px;font-size:12px;letter-spacing:-0.3px;line-height:15px;color:#111">2</div>
<div class="c" style="left:546.0px;top:678.2px;width:21.0px;height:15px;display:flex;justify-content:safe flex-end;font-size:12px;letter-spacing:-0.3px;line-height:15px;color:#111"><span>0,00</span></div>
<div class="c" style="left:571.0px;top:678.2px;width:21.0px;height:15px;display:flex;justify-content:safe flex-end;font-size:12px;letter-spacing:-0.3px;line-height:15px;color:#111"><span>0,00</span></div>
<div class="c" style="left:596.0px;top:678.2px;width:27.0px;height:15px;display:flex;justify-content:safe flex-end;font-size:12px;letter-spacing:-0.3px;line-height:15px;color:#111"><span>0,00</span></div>
<div class="c" style="left:627.0px;top:678.2px;width:30.0px;height:15px;display:flex;justify-content:safe flex-end;font-size:12px;letter-spacing:-0.3px;line-height:15px;color:#111"><span>0,00</span></div>
<div class="c" style="left:661.0px;top:678.2px;width:27.0px;height:15px;display:flex;justify-content:safe flex-end;font-size:12px;letter-spacing:-0.3px;line-height:15px;color:#111"><span>0,00</span></div>
<div class="c" style="left:692.0px;top:678.2px;width:27.0px;height:15px;display:flex;justify-content:safe flex-end;font-size:12px;letter-spacing:-0.3px;line-height:15px;color:#111"><span>0,00</span></div>
<div class="c" style="left:723.0px;top:678.2px;width:22.0px;height:15px;display:flex;justify-content:safe flex-end;font-size:12px;letter-spacing:-0.3px;line-height:15px;color:#111"><span>0,00</span></div>
<div class="c" style="left:749.0px;top:678.2px;width:24.0px;height:15px;display:flex;justify-content:safe flex-end;font-size:12px;letter-spacing:-0.3px;line-height:15px;color:#111"><span>0,00</span></div>
<div class="c" style="left:777.0px;top:678.2px;width:17.0px;height:15px;display:flex;justify-content:safe flex-end;font-size:12px;letter-spacing:-0.3px;line-height:15px;color:#111"><span>0,00</span></div>
<div class="c" style="left:798.0px;top:678.2px;width:24.0px;height:15px;display:flex;justify-content:safe flex-end;font-size:12px;letter-spacing:-0.3px;line-height:15px;color:#111"><span>24,00</span></div>
<div class="c" style="left:826.0px;top:678.2px;width:20.0px;height:15px;display:flex;justify-content:safe flex-end;font-size:12px;letter-spacing:-0.3px;line-height:15px;color:#111"><span>0,00</span></div>
<div class="c" style="left:850.0px;top:678.2px;width:27.0px;height:15px;display:flex;justify-content:safe flex-end;font-size:12px;letter-spacing:-0.3px;line-height:15px;color:#111"><span>0,00</span></div>
<div class="c" style="left:881.0px;top:678.2px;width:26.0px;height:15px;display:flex;justify-content:safe flex-end;font-size:12px;letter-spacing:-0.3px;line-height:15px;color:#111"><span>0,00</span></div>
<div class="c" style="left:911.0px;top:678.2px;width:26.0px;height:15px;display:flex;justify-content:safe flex-end;font-size:12px;letter-spacing:-0.3px;line-height:15px;color:#111"><span>24,00</span></div>
<div class="c" style="left:319.5px;top:699.3px;width:27.5px;height:15px;font-size:12px;letter-spacing:-0.3px;line-height:15px;color:#111">Toplam</div>
<div class="c" style="left:546.0px;top:699.3px;width:21.0px;height:15px;display:flex;justify-content:safe flex-end;font-size:12px;letter-spacing:-0.3px;line-height:15px;color:#111"><span>98,65</span></div>
<div class="c" style="left:571.0px;top:699.3px;width:21.0px;height:15px;display:flex;justify-content:safe flex-end;font-size:12px;letter-spacing:-0.3px;line-height:15px;color:#111"><span>12,00</span></div>
<div class="c" style="left:596.0px;top:699.3px;width:27.0px;height:15px;display:flex;justify-content:safe flex-end;font-size:12px;letter-spacing:-0.3px;line-height:15px;color:#111"><span>0,00</span></div>
<div class="c" style="left:627.0px;top:699.3px;width:30.0px;height:15px;display:flex;justify-content:safe flex-end;font-size:12px;letter-spacing:-0.3px;line-height:15px;color:#111"><span>0,00</span></div>
<div class="c" style="left:661.0px;top:699.3px;width:27.0px;height:15px;display:flex;justify-content:safe flex-end;font-size:12px;letter-spacing:-0.3px;line-height:15px;color:#111"><span>0,00</span></div>
<div class="c" style="left:692.0px;top:699.3px;width:27.0px;height:15px;display:flex;justify-content:safe flex-end;font-size:12px;letter-spacing:-0.3px;line-height:15px;color:#111"><span>0,00</span></div>
<div class="c" style="left:723.0px;top:699.3px;width:22.0px;height:15px;display:flex;justify-content:safe flex-end;font-size:12px;letter-spacing:-0.3px;line-height:15px;color:#111"><span>0,00</span></div>
<div class="c" style="left:749.0px;top:699.3px;width:24.0px;height:15px;display:flex;justify-content:safe flex-end;font-size:12px;letter-spacing:-0.3px;line-height:15px;color:#111"><span>0,00</span></div>
<div class="c" style="left:777.0px;top:699.3px;width:17.0px;height:15px;display:flex;justify-content:safe flex-end;font-size:12px;letter-spacing:-0.3px;line-height:15px;color:#111"><span>0,00</span></div>
<div class="c" style="left:798.0px;top:699.3px;width:24.0px;height:15px;display:flex;justify-content:safe flex-end;font-size:12px;letter-spacing:-0.3px;line-height:15px;color:#111"><span>110,65</span></div>
<div class="c" style="left:826.0px;top:699.3px;width:20.0px;height:15px;display:flex;justify-content:safe flex-end;font-size:12px;letter-spacing:-0.3px;line-height:15px;color:#111"><span>0,00</span></div>
<div class="c" style="left:850.0px;top:699.3px;width:27.0px;height:15px;display:flex;justify-content:safe flex-end;font-size:12px;letter-spacing:-0.3px;line-height:15px;color:#111"><span>0,00</span></div>
<div class="c" style="left:881.0px;top:699.3px;width:26.0px;height:15px;display:flex;justify-content:safe flex-end;font-size:12px;letter-spacing:-0.3px;line-height:15px;color:#111"><span>0,00</span></div>
<div class="c" style="left:911.0px;top:699.3px;width:26.0px;height:15px;display:flex;justify-content:safe flex-end;font-size:12px;letter-spacing:-0.3px;line-height:15px;color:#111"><span>110,65</span></div>
<div class="a" style="left:1122px;top:448px;width:199px;height:115px;background:#f2f2f2;border:1px solid #979797;box-shadow:3px 3px 3px rgba(0,0,0,0.35)"></div>
<div class="a" style="left:1153px;top:452px;width:1px;height:107px;background:#e2e3e3"></div>
<div class="a" style="left:1154px;top:452px;width:1px;height:107px;background:#fff"></div>
<div class="a t" style="left:1161.5px;top:458.11px;font-size:11.8px;line-height:11.8px;color:#111">Değişiklikleri Kaydet</div>
<div class="a t" style="left:1161.5px;top:479.81px;font-size:11.8px;line-height:11.8px;color:#111">Grid Editor</div>
<div class="a t" style="left:1161.5px;top:501.81px;font-size:11.8px;line-height:11.8px;color:#111">View Editor</div>
<div class="a t" style="left:1161.5px;top:523.61px;font-size:11.8px;line-height:11.8px;color:#111">Yazdırma Önizleme</div>
<div class="a t" style="left:1161.5px;top:545.91px;font-size:11.8px;line-height:11.8px;color:#111">Düzeni Sıfırla</div>

<svg class="a" style="left:0;top:0" width="1366" height="728" viewBox="0 0 1366 728">
<defs>
 <filter id="sh" x="-20%" y="-20%" width="140%" height="140%"><feGaussianBlur stdDeviation="1.8"/></filter>
 <filter id="sh2" x="-20%" y="-20%" width="140%" height="140%"><feGaussianBlur stdDeviation="2.6"/></filter>
 <linearGradient id="gcall" x1="0" y1="0" x2="0" y2="1"><stop offset="0" stop-color="#ffffff"/><stop offset="0.6" stop-color="#fff6f7"/><stop offset="1" stop-color="#f6c9d0"/></linearGradient>
</defs>
<!-- shadows -->
<g opacity="0.5" filter="url(#sh2)" transform="translate(3,4)">
 <path d="M938.8,300.5 C917.3,351.7 862.8,456.4 938,490.4 C999.9,520.2 1080.6,521.5 1148,524.6" stroke="#444" stroke-width="4" fill="none"/>
 <path d="M1170,565.9 C1043.2,625.2 933.7,649.7 813,563.5" stroke="#444" stroke-width="4" fill="none"/>
 <path d="M1160,525.5 L1146.5,517.7 L1145.3,532.1 Z" fill="#333"/>
 <path d="M803,553.3 L819,556.9 L810.5,568 Z" fill="#333"/>
 <rect x="897" y="263" width="81" height="31" rx="5" fill="#222"/>
</g>
<path d="M938.8,300.5 C917.3,351.7 862.8,456.4 938,490.4 C999.9,520.2 1080.6,521.5 1148,524.6" stroke="#fc9a08" stroke-width="3.2" fill="none"/>
<path d="M1160,525.5 L1146.5,517.2 L1145.3,532.6 Z" fill="#fc9a08"/>
<path d="M1170,565.9 C1043.2,625.2 933.7,649.7 813,563.5" stroke="#fc9a08" stroke-width="3.2" fill="none"/>
<path d="M802.5,553 L819.5,556.5 L810,568.5 Z" fill="#fc9a08"/>
<!-- callout -->
<clipPath id="ccl"><path d="M901,262 H970.5 Q975.5,262 975.5,267 V286.3 Q975.5,291.3 970.5,291.3 H935 L940.5,300 L924,291.3 H901 Q896,291.3 896,286.3 V267 Q896,262 901,262 Z"/></clipPath>
<filter id="bl1"><feGaussianBlur stdDeviation="0.9"/></filter>
<path d="M901,262 H970.5 Q975.5,262 975.5,267 V286.3 Q975.5,291.3 970.5,291.3 H935 L940.5,300 L924,291.3 H901 Q896,291.3 896,286.3 V267 Q896,262 901,262 Z" fill="#fff"/>
<g clip-path="url(#ccl)"><path d="M901,262 H970.5 Q975.5,262 975.5,267 V286.3 Q975.5,291.3 970.5,291.3 H935 L940.5,300 L924,291.3 H901 Q896,291.3 896,286.3 V267 Q896,262 901,262 Z" fill="none" stroke="#ff2f45" stroke-width="4.5" filter="url(#bl1)"/></g>
<path d="M901,262 H970.5 Q975.5,262 975.5,267 V286.3 Q975.5,291.3 970.5,291.3 H935 L940.5,300 L924,291.3 H901 Q896,291.3 896,286.3 V267 Q896,262 901,262 Z" fill="none" stroke="#9c0a1c" stroke-width="1.3"/>
<text x="903.5" y="281" font-family="Liberation Sans" font-weight="bold" font-size="12.3" fill="#111">Right Click</text>
<!-- arrow cursor -->
<linearGradient id="gcur" x1="0" y1="0" x2="1" y2="1"><stop offset="0" stop-color="#ffffff"/><stop offset="1" stop-color="#c9c9c9"/></linearGradient>
<g transform="translate(940.4,300.2)">
 <path d="M2.5,2.5 L2.5,24 L7.5,19.3 L10.8,26.7 L14,25.3 L10.8,18.4 L16.7,18.4 Z" fill="#000" opacity="0.35" filter="url(#sh2)"/>
 <path d="M0,0 L0,21.5 L5,16.8 L8.3,24.2 L11.5,22.8 L8.3,15.9 L14.2,15.9 Z" fill="url(#gcur)" stroke="#000" stroke-width="1.3" stroke-linejoin="miter"/>
</g>
<!-- star -->
<path d="M1275.9,530.5 L1285.1,529.7 L1277.3,519.4 L1286.9,528.0 L1288.4,519.0 L1289.3,528.1 L1299.4,519.9 L1290.9,529.7 L1307.6,529.5 L1291.2,531.3 L1308.6,536.3 L1289.4,533.9 L1280.7,546.3 L1285.9,533.4 L1274.9,539.6 L1284.9,531.9 Z" fill="#f7c52a" stroke="#e0a000" stroke-width="1" stroke-linejoin="miter"/>
<circle cx="1288" cy="531" r="2.5" fill="#fff3a8"/>
<!-- hand cursor -->
<linearGradient id="ghand" x1="0" y1="0" x2="1" y2="0"><stop offset="0.4" stop-color="#ffffff"/><stop offset="1" stop-color="#cfcfcf"/></linearGradient>
<path d="M1285.2,547 V532.2 Q1285.2,529.9 1287.5,529.9 Q1289.8,529.9 1289.8,532.2 V539.5 Q1289.8,537.5 1291.9,537.5 Q1294,537.5 1294,539.5 V540 Q1294,538.1 1296,538.1 Q1298,538.1 1298,540 V542 Q1298,540.1 1299.9,540.1 Q1301.8,540.1 1301.8,542 V552 Q1301.8,556 1298.4,560.2 H1285.8 Q1282,556.5 1280.6,551 V546 Q1280.6,542.4 1282.8,542.4 Q1285.2,542.6 1285.2,545 Z" fill="#000" opacity="0.4" filter="url(#sh2)" transform="translate(3,3)"/>
<path d="M1285.2,547 V532.2 Q1285.2,529.9 1287.5,529.9 Q1289.8,529.9 1289.8,532.2 V539.5 Q1289.8,537.5 1291.9,537.5 Q1294,537.5 1294,539.5 V540 Q1294,538.1 1296,538.1 Q1298,538.1 1298,540 V542 Q1298,540.1 1299.9,540.1 Q1301.8,540.1 1301.8,542 V552 Q1301.8,556 1298.4,560.2 H1285.8 Q1282,556.5 1280.6,551 V546 Q1280.6,542.4 1282.8,542.4 Q1285.2,542.6 1285.2,545 Z" fill="url(#ghand)" stroke="#000" stroke-width="1.3" stroke-linejoin="round"/>
<path d="M1289.8,539.5 V544.5 M1294,540 V545 M1298,542 V545.5" stroke="#000" stroke-width="1"/>
</svg>

</body></html>
